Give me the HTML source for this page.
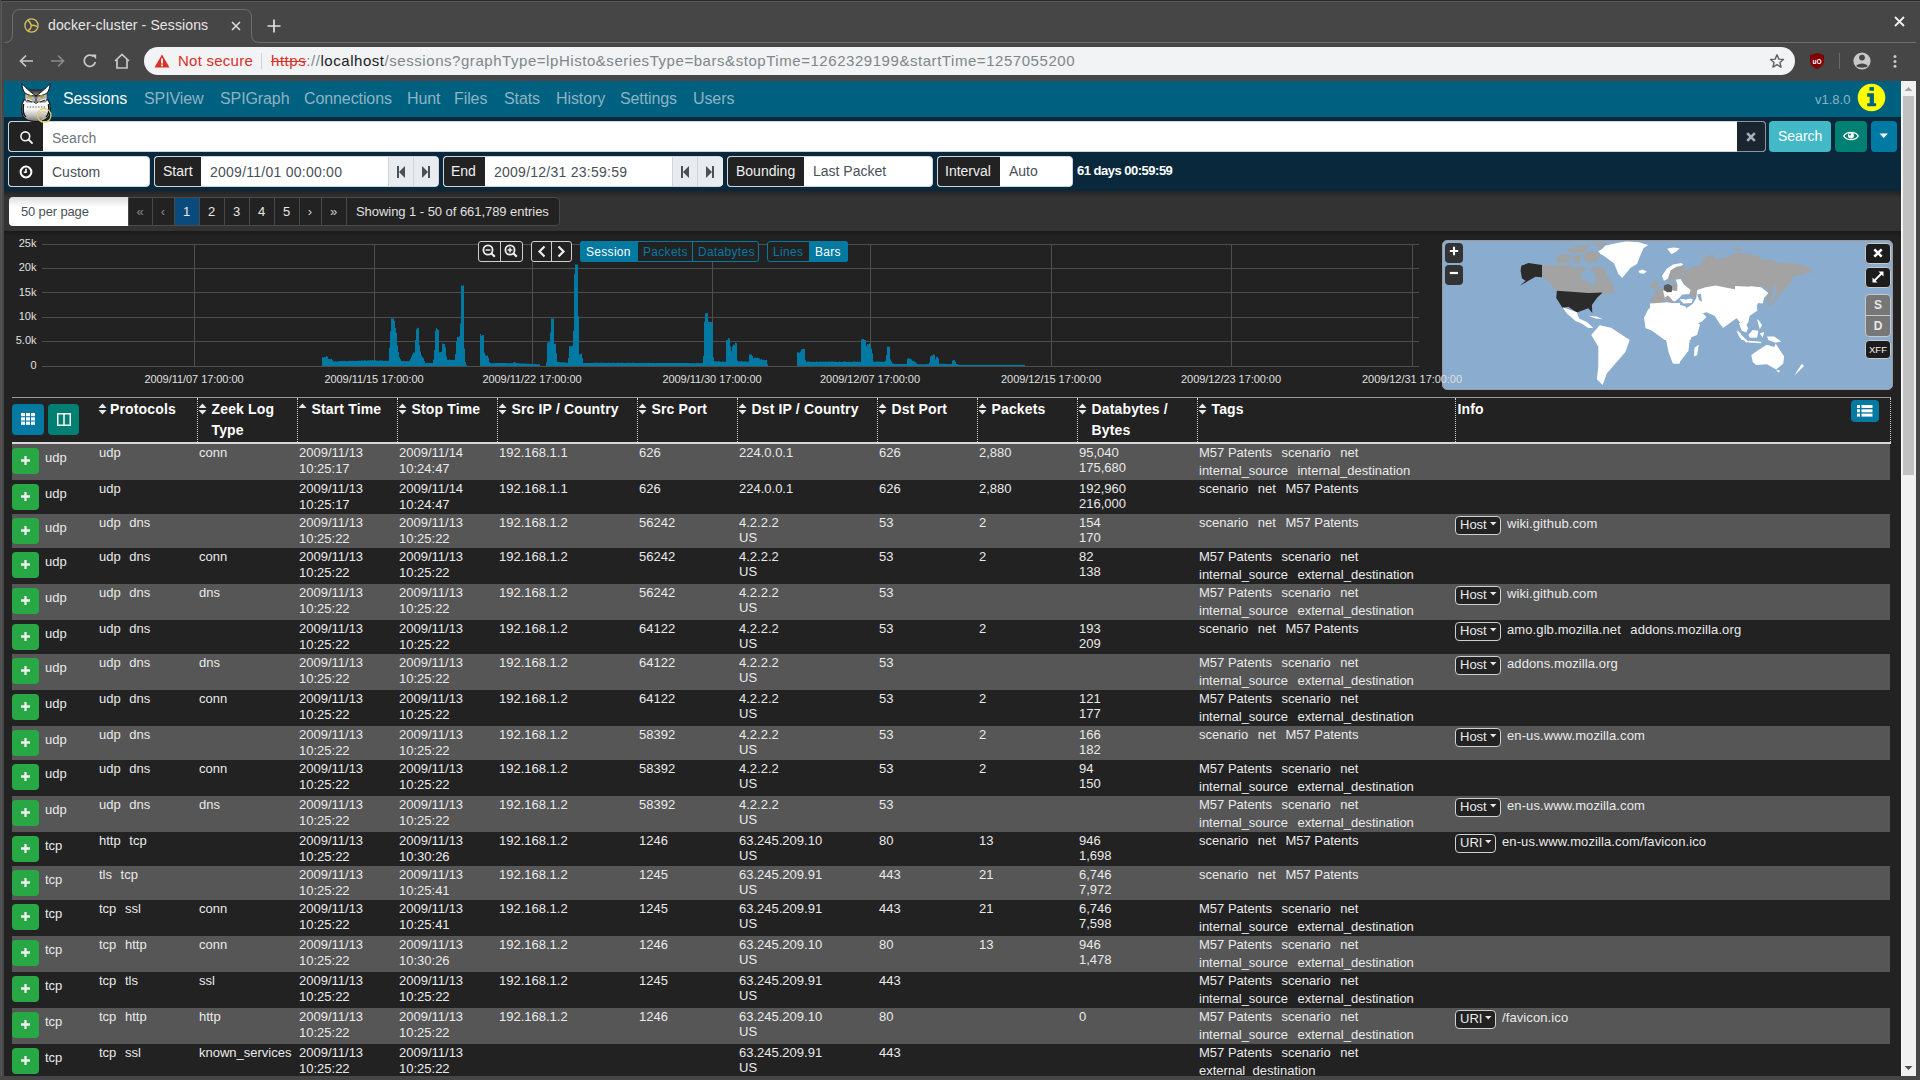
<!DOCTYPE html>
<html><head><meta charset="utf-8"><style>
*{box-sizing:border-box;margin:0;padding:0}
html,body{width:1920px;height:1080px;overflow:hidden;background:#464646;font-family:"Liberation Sans",sans-serif}
.a{position:absolute}
.t{position:absolute;white-space:pre}
svg{position:absolute;overflow:visible}
</style></head><body>
<div class="a" style="left:0px;top:0px;width:1920px;height:81px;background:#464646;"></div>
<div class="a" style="left:0px;top:0px;width:1920px;height:1px;background:#2a2a2a;"></div>
<div class="a" style="left:0px;top:1px;width:1920px;height:1px;background:#5a5a5a;"></div>
<div class="a" style="left:0px;top:0px;width:1px;height:1080px;background:#4e4e4e;"></div>
<div class="a" style="left:1px;top:1px;width:1px;height:1079px;background:#5a5a5a;"></div>
<svg style="left:0;top:0" width="300" height="44"><path d="M4.5 42.5 Q12.5 42.5 12.5 34.5 L12.5 17 Q12.5 9.5 20 9.5 L244 9.5 Q251.5 9.5 251.5 17 L251.5 34.5 Q251.5 42.5 259.5 42.5" fill="none" stroke="#6e6e6e" stroke-width="1"/></svg>
<div class="a" style="left:259px;top:42px;width:1657px;height:1px;background:#6e6e6e;"></div>
<svg style="left:24px;top:18px" width="15" height="15" viewBox="0 0 15 15"><circle cx="7.5" cy="7.5" r="6.6" fill="none" stroke="#d9c25a" stroke-width="1.3"/><path d="M7.5 7.5 C6.5 5.5 5.5 3.5 3.8 2.2 M7.5 7.5 C9.5 7 11.5 7.5 13.6 8.8 M7.5 7.5 C7.2 9.5 6 11.5 4.2 12.8" fill="none" stroke="#d9c25a" stroke-width="1.5"/></svg>
<div class="t" style="left:48px;top:16.87px;font-size:14px;line-height:17px;color:#e6e6e6;letter-spacing:0.12px;">docker-cluster - Sessions</div>
<svg style="left:230.5px;top:21px" width="10" height="10"><path d="M1 1 L9 9 M9 1 L1 9" stroke="#e0e0e0" stroke-width="1.5"/></svg>
<svg style="left:267px;top:19px" width="14" height="14"><path d="M7 0.5 V13.5 M0.5 7 H13.5" stroke="#e0e0e0" stroke-width="1.7"/></svg>
<svg style="left:1894px;top:16px" width="11" height="11"><path d="M1 1 L10 10 M10 1 L1 10" stroke="#f0f0f0" stroke-width="1.8"/></svg>
<svg style="left:18px;top:53px" width="16" height="16"><path d="M15 8 H2.5 M8 2.5 L2.5 8 L8 13.5" fill="none" stroke="#c8c8c8" stroke-width="1.7"/></svg>
<svg style="left:50px;top:53px" width="16" height="16"><path d="M1 8 H13.5 M8 2.5 L13.5 8 L8 13.5" fill="none" stroke="#8a8a8a" stroke-width="1.7"/></svg>
<svg style="left:82px;top:53px" width="16" height="16"><path d="M13.3 9 A5.6 5.6 0 1 1 11.6 3.6" fill="none" stroke="#c8c8c8" stroke-width="1.7"/><path d="M9.5 1.5 H14.2 V6.2 Z" fill="#c8c8c8"/></svg>
<svg style="left:113px;top:52px" width="18" height="18"><path d="M2 9 L9 2.5 L16 9 M4 7.5 V16 H14 V7.5" fill="none" stroke="#c8c8c8" stroke-width="1.7"/></svg>
<div class="a" style="left:144px;top:47px;width:1651px;height:28px;background:#f1f3f4;border-radius:14px;"></div>
<svg style="left:154px;top:54px" width="16" height="14"><path d="M8 0.5 L15.5 13.5 H0.5 Z" fill="#d93025"/><rect x="7.1" y="4.5" width="1.8" height="5" fill="#fff"/><rect x="7.1" y="10.5" width="1.8" height="1.8" fill="#fff"/></svg>
<div class="t" style="left:178px;top:52.04px;font-size:15px;line-height:18px;color:#d93025;letter-spacing:0.25px;">Not secure</div>
<div class="a" style="left:261px;top:53px;width:1px;height:16px;background:#d0d2d4;"></div>
<div class="t" style="left:271px;top:51.5px;font-size:15px;line-height:18px;letter-spacing:0.55px"><span style="color:#d93025;text-decoration:line-through">https</span><span style="color:#80868b">://</span><span style="color:#202124">localhost</span><span style="color:#80868b">/sessions?graphType=lpHisto&amp;seriesType=bars&amp;stopTime=1262329199&amp;startTime=1257055200</span></div>
<svg style="left:1768px;top:52px" width="18" height="18" viewBox="0 0 18 18"><path d="M9 1.8 L11.1 6.6 L16.2 7 L12.3 10.4 L13.5 15.5 L9 12.8 L4.5 15.5 L5.7 10.4 L1.8 7 L6.9 6.6 Z" transform="translate(9 9.3) scale(0.9) translate(-9 -9)" fill="none" stroke="#5f6368" stroke-width="1.6" stroke-linejoin="round"/></svg>
<svg style="left:1809px;top:52px" width="16" height="18" viewBox="0 0 16 18"><path d="M8 1 L15 3 V9 C15 13 11.5 15.5 8 17 C4.5 15.5 1 13 1 9 V3 Z" fill="#800000"/><text x="8" y="11.5" font-size="6.5" font-family="Liberation Sans" font-weight="700" fill="#fff" text-anchor="middle">uO</text></svg>
<div class="a" style="left:1839px;top:53px;width:1px;height:16px;background:#6a6a6a;"></div>
<svg style="left:1852px;top:51px" width="20" height="20" viewBox="0 0 20 20"><circle cx="10" cy="10" r="8.6" fill="#c8c8c8"/><circle cx="10" cy="6.6" r="2.9" fill="#464646"/><path d="M4.2 15 C6 11.5 14 11.5 15.8 15 C14 17.3 6 17.3 4.2 15 Z" fill="#464646"/></svg>
<svg style="left:1891.5px;top:53px" width="6" height="16"><circle cx="3" cy="3.6" r="1.5" fill="#c8c8c8"/><circle cx="3" cy="8.4" r="1.5" fill="#c8c8c8"/><circle cx="3" cy="13.3" r="1.5" fill="#c8c8c8"/></svg>
<div class="a" style="left:4px;top:81px;width:1897px;height:995px;background:#222;"></div>
<div class="a" style="left:4px;top:81px;width:1897px;height:36px;background:#00607f;"></div>
<div class="t" style="left:63px;top:89.21px;font-size:16px;line-height:19px;color:#f4f8fa;letter-spacing:-0.1px;">Sessions</div>
<div class="t" style="left:144px;top:89.21px;font-size:16px;line-height:19px;color:#8db4c4;letter-spacing:-0.1px;">SPIView</div>
<div class="t" style="left:220px;top:89.21px;font-size:16px;line-height:19px;color:#8db4c4;letter-spacing:-0.1px;">SPIGraph</div>
<div class="t" style="left:304px;top:89.21px;font-size:16px;line-height:19px;color:#8db4c4;letter-spacing:-0.1px;">Connections</div>
<div class="t" style="left:407px;top:89.21px;font-size:16px;line-height:19px;color:#8db4c4;letter-spacing:-0.1px;">Hunt</div>
<div class="t" style="left:454px;top:89.21px;font-size:16px;line-height:19px;color:#8db4c4;letter-spacing:-0.1px;">Files</div>
<div class="t" style="left:504px;top:89.21px;font-size:16px;line-height:19px;color:#8db4c4;letter-spacing:-0.1px;">Stats</div>
<div class="t" style="left:556px;top:89.21px;font-size:16px;line-height:19px;color:#8db4c4;letter-spacing:-0.1px;">History</div>
<div class="t" style="left:620px;top:89.21px;font-size:16px;line-height:19px;color:#8db4c4;letter-spacing:-0.1px;">Settings</div>
<div class="t" style="left:693px;top:89.21px;font-size:16px;line-height:19px;color:#8db4c4;letter-spacing:-0.1px;">Users</div>
<div class="t" style="left:1815px;top:92.20px;font-size:13px;line-height:16px;color:#8db4c4;letter-spacing:0px;">v1.8.0</div>
<svg style="left:1857px;top:83px" width="29" height="29" viewBox="0 0 29 29"><circle cx="14.5" cy="14.5" r="13.8" fill="#ffff00"/><rect x="12.4" y="4.1" width="4.5" height="3.6" fill="#00607f"/><path d="M10.2 10.2 H16.9 V20.2 H19.1 V23.3 H10.2 V20.2 H12.7 V13.8 H10.2 Z" fill="#00607f"/></svg>
<svg style="left:14px;top:80px;z-index:5" width="44" height="44" viewBox="0 0 44 44">
<defs><linearGradient id="og" x1="0" y1="0" x2="0" y2="1"><stop offset="0" stop-color="#ffffff"/><stop offset="0.45" stop-color="#f4f4f4"/><stop offset="0.75" stop-color="#b8b8b8"/><stop offset="1" stop-color="#707070"/></linearGradient>
<linearGradient id="hg" x1="0" y1="0" x2="0" y2="1"><stop offset="0" stop-color="#222"/><stop offset="1" stop-color="#aaa"/></linearGradient></defs>
<path d="M10 20 C7 24 7 32 9 36 C11 40 15 41.5 22 41.5 C29 41.5 33 40 35 36 C37 32 37 24 34 20 Z" fill="url(#og)" stroke="#111" stroke-width="1.1"/>
<path d="M11.5 13 C10.5 16 10.5 20 12.5 22 L31.5 22 C33.5 20 33.5 16 32.5 13 Z" fill="#b4b4b4" stroke="#333" stroke-width="0.6"/><path d="M12 19 L18 21 M32 19 L26 21" stroke="#fff" stroke-width="1.2"/>
<path d="M15 9.5 L29 9.5 L28 15 L22 17 L16 15 Z" fill="url(#hg)"/>
<path d="M8 3.5 C11 7 15 11 22 16 C18 16 14 15 11.5 13.5 C9 11 8 7 8 3.5 Z" fill="#fff" stroke="#111" stroke-width="1"/>
<path d="M36 3.5 C33 7 29 11 22 16 C26 16 30 15 32.5 13.5 C35 11 36 7 36 3.5 Z" fill="#fff" stroke="#111" stroke-width="1"/>
<ellipse cx="16.5" cy="16.3" rx="2" ry="1.4" fill="#a09a10"/><ellipse cx="27.5" cy="16.3" rx="2" ry="1.4" fill="#a09a10"/>
<path d="M21 17 L22 21.5 L23 17 Z" fill="#fff" stroke="#111" stroke-width="0.6"/>
<path d="M13 20 L18 22 M31 20 L26 22 M20 22 L22 23.5 L24 22" stroke="#111" stroke-width="0.9" fill="none"/>
<path d="M13 27 L31 27" stroke="#333" stroke-width="0.9" stroke-dasharray="1.2 1.6"/>
<path d="M9.5 24 C8.5 30 9.5 35 12 37 M34.5 24 C35.5 30 34.5 35 32 37" stroke="#111" stroke-width="1.6" fill="none"/>
<circle cx="30.2" cy="35.4" r="6.8" fill="none" stroke="#e0cf6a" stroke-width="1.2"/>
<path d="M25 34 C27 31 31 31 33 33 M29 36 C30 38 29 40 27 41" stroke="#e0cf6a" stroke-width="1" fill="none"/>
</svg>
<div class="a" style="left:4px;top:117px;width:1897px;height:74px;background:#0a283c;"></div>
<div class="a" style="left:8px;top:121px;width:1758px;height:31px;background:#fff;border-radius:4px;border:1px solid #ced4da;"></div>
<div class="a" style="left:8px;top:121px;width:35px;height:31px;background:#222;border-radius:4px 0 0 4px;border:1px solid #ced4da;border-right:none;"></div>
<svg style="left:19px;top:130px" width="15" height="15" viewBox="0 0 15 15"><circle cx="6.3" cy="6.3" r="4.4" fill="none" stroke="#f0f0f0" stroke-width="1.6"/><path d="M9.5 9.5 L13 13" stroke="#f0f0f0" stroke-width="1.8" stroke-linecap="round"/></svg>
<div class="t" style="left:52px;top:129.87px;font-size:14px;line-height:17px;color:#6c757d;">Search</div>
<div class="a" style="left:1737px;top:121px;width:29px;height:31px;background:#1b2530;border-radius:0 4px 4px 0;border:1px solid #8d959c;border-left:none;"></div>
<svg style="left:1746px;top:132px" width="10" height="10"><path d="M1.2 1.2 L8.8 8.8 M8.8 1.2 L1.2 8.8" stroke="#a9b0b6" stroke-width="2.6"/></svg>
<div class="a" style="left:1769px;top:121px;width:62px;height:31px;background:#43b8c7;border-radius:4px;"></div>
<div class="t" style="left:1778px;top:128.37px;font-size:14px;line-height:17px;color:#fff;">Search</div>
<div class="a" style="left:1835px;top:121px;width:32px;height:31px;background:#007f73;border-radius:4px;"></div>
<svg style="left:1843px;top:130px" width="16" height="12" viewBox="0 0 16 12"><path d="M0.8 6 C3.5 1.2 12.5 1.2 15.2 6 C12.5 10.8 3.5 10.8 0.8 6 Z" fill="none" stroke="#fff" stroke-width="1.4"/><circle cx="8" cy="5.6" r="3" fill="#fff"/><circle cx="7" cy="4.6" r="1" fill="#007f73"/></svg>
<div class="a" style="left:1871px;top:121px;width:26px;height:31px;background:#0079a3;border-radius:4px;"></div>
<svg style="left:1879px;top:132.5px" width="10" height="6"><path d="M0.5 0.5 H9 L4.75 5 Z" fill="#fff"/></svg>
<div class="a" style="left:8px;top:156px;width:142px;height:31px;background:#fff;border-radius:4px;border:1px solid #ced4da;"></div>
<div class="a" style="left:8px;top:156px;width:35px;height:31px;background:#222;border-radius:4px 0 0 4px;border:1px solid #ced4da;border-right:none;"></div>
<svg style="left:19px;top:165px" width="14" height="14" viewBox="0 0 14 14"><circle cx="7" cy="7" r="5.4" fill="none" stroke="#fff" stroke-width="2"/><path d="M7 3.8 V7.3 H4.8" fill="none" stroke="#fff" stroke-width="1.6"/></svg>
<div class="t" style="left:52px;top:163.87px;font-size:14px;line-height:17px;color:#495057;">Custom</div>
<div class="a" style="left:154px;top:156px;width:285px;height:31px;background:#fff;border-radius:4px;border:1px solid #ced4da;"></div>
<div class="a" style="left:154px;top:156px;width:47px;height:31px;background:#222;border-radius:4px 0 0 4px;border:1px solid #ced4da;border-right:none;"></div>
<div class="t" style="left:163px;top:163.37px;font-size:14px;line-height:17px;color:#f0f0f0;">Start</div>
<div class="t" style="left:210px;top:163.87px;font-size:14px;line-height:17px;color:#495057;letter-spacing:0.25px;">2009/11/01 00:00:00</div>
<div class="a" style="left:388px;top:157px;width:50px;height:29px;background:#e9ecef;border-radius:0 3px 3px 0;"></div>
<div class="a" style="left:413px;top:157px;width:1px;height:29px;background:#ced4da;"></div>
<div class="a" style="left:388px;top:157px;width:1px;height:29px;background:#ced4da;"></div>
<svg style="left:397px;top:166px" width="9" height="12"><rect x="0" y="0" width="2" height="12" fill="#495057"/><path d="M8 0 V12 L2 6 Z" fill="#495057"/></svg>
<svg style="left:422px;top:166px" width="9" height="12"><path d="M0 0 V12 L6 6 Z" fill="#495057"/><rect x="6" y="0" width="2" height="12" fill="#495057"/></svg>
<div class="a" style="left:443px;top:156px;width:280px;height:31px;background:#fff;border-radius:4px;border:1px solid #ced4da;"></div>
<div class="a" style="left:443px;top:156px;width:42px;height:31px;background:#222;border-radius:4px 0 0 4px;border:1px solid #ced4da;border-right:none;"></div>
<div class="t" style="left:451px;top:163.37px;font-size:14px;line-height:17px;color:#f0f0f0;">End</div>
<div class="t" style="left:494px;top:163.87px;font-size:14px;line-height:17px;color:#495057;letter-spacing:0.25px;">2009/12/31 23:59:59</div>
<div class="a" style="left:672px;top:157px;width:51px;height:29px;background:#e9ecef;border-radius:0 3px 3px 0;"></div>
<div class="a" style="left:672px;top:157px;width:1px;height:29px;background:#ced4da;"></div>
<div class="a" style="left:697px;top:157px;width:1px;height:29px;background:#ced4da;"></div>
<svg style="left:681px;top:166px" width="9" height="12"><rect x="0" y="0" width="2" height="12" fill="#495057"/><path d="M8 0 V12 L2 6 Z" fill="#495057"/></svg>
<svg style="left:706px;top:166px" width="9" height="12"><path d="M0 0 V12 L6 6 Z" fill="#495057"/><rect x="6" y="0" width="2" height="12" fill="#495057"/></svg>
<div class="a" style="left:727px;top:156px;width:206px;height:31px;background:#fff;border-radius:4px;border:1px solid #ced4da;"></div>
<div class="a" style="left:727px;top:156px;width:77px;height:31px;background:#222;border-radius:4px 0 0 4px;border:1px solid #ced4da;border-right:none;"></div>
<div class="t" style="left:736px;top:163.37px;font-size:14px;line-height:17px;color:#f0f0f0;">Bounding</div>
<div class="t" style="left:813px;top:163.37px;font-size:14px;line-height:17px;color:#495057;">Last Packet</div>
<div class="a" style="left:937px;top:156px;width:136px;height:31px;background:#fff;border-radius:4px;border:1px solid #ced4da;"></div>
<div class="a" style="left:937px;top:156px;width:63px;height:31px;background:#222;border-radius:4px 0 0 4px;border:1px solid #ced4da;border-right:none;"></div>
<div class="t" style="left:945px;top:163.37px;font-size:14px;line-height:17px;color:#f0f0f0;">Interval</div>
<div class="t" style="left:1009px;top:163.37px;font-size:14px;line-height:17px;color:#495057;">Auto</div>
<div class="t" style="left:1077px;top:162.70px;font-size:13px;line-height:16px;color:#fff;font-weight:700;letter-spacing:-0.5px;">61 days 00:59:59</div>
<div class="a" style="left:4px;top:191px;width:1897px;height:40px;background:linear-gradient(#232323,#333 7px,#333);"></div>
<div class="a" style="left:4px;top:231px;width:1897px;height:6px;background:linear-gradient(#1a1a1a,#222);"></div>
<div class="a" style="left:9px;top:197px;width:120px;height:29px;background:#fff;border-radius:4px 0 0 4px;background:linear-gradient(#dcdcdc,#fff 35%);"></div>
<div class="t" style="left:21px;top:203.70px;font-size:13px;line-height:16px;color:#495057;letter-spacing:-0.15px;">50 per page</div>
<div class="a" style="left:128px;top:197px;width:432px;height:29px;background:#222;border-radius:0 4px 4px 0;border:1px solid #4a4a4a;"></div>
<div class="t" style="left:128px;top:204px;width:24px;text-align:center;font-size:13px;line-height:15px;color:#8a8a8a">«</div>
<div class="a" style="left:152px;top:198px;width:1px;height:27px;background:#4a4a4a;"></div>
<div class="t" style="left:152px;top:204px;width:22px;text-align:center;font-size:13px;line-height:15px;color:#8a8a8a">‹</div>
<div class="a" style="left:174px;top:198px;width:1px;height:27px;background:#4a4a4a;"></div>
<div class="a" style="left:175px;top:198px;width:24px;height:27px;background:#0a4b7e;"></div>
<div class="t" style="left:174px;top:204px;width:25px;text-align:center;font-size:13px;line-height:15px;color:#e8e8e8">1</div>
<div class="a" style="left:199px;top:198px;width:1px;height:27px;background:#4a4a4a;"></div>
<div class="t" style="left:199px;top:204px;width:25px;text-align:center;font-size:13px;line-height:15px;color:#e8e8e8">2</div>
<div class="a" style="left:224px;top:198px;width:1px;height:27px;background:#4a4a4a;"></div>
<div class="t" style="left:224px;top:204px;width:25px;text-align:center;font-size:13px;line-height:15px;color:#e8e8e8">3</div>
<div class="a" style="left:249px;top:198px;width:1px;height:27px;background:#4a4a4a;"></div>
<div class="t" style="left:249px;top:204px;width:25px;text-align:center;font-size:13px;line-height:15px;color:#e8e8e8">4</div>
<div class="a" style="left:274px;top:198px;width:1px;height:27px;background:#4a4a4a;"></div>
<div class="t" style="left:274px;top:204px;width:25px;text-align:center;font-size:13px;line-height:15px;color:#e8e8e8">5</div>
<div class="a" style="left:299px;top:198px;width:1px;height:27px;background:#4a4a4a;"></div>
<div class="t" style="left:299px;top:204px;width:22px;text-align:center;font-size:13px;line-height:15px;color:#d0d0d0">›</div>
<div class="a" style="left:321px;top:198px;width:1px;height:27px;background:#4a4a4a;"></div>
<div class="t" style="left:321px;top:204px;width:25px;text-align:center;font-size:13px;line-height:15px;color:#d0d0d0">»</div>
<div class="a" style="left:346px;top:198px;width:1px;height:27px;background:#4a4a4a;"></div>
<div class="t" style="left:356px;top:203.70px;font-size:13px;line-height:16px;color:#e0e0e0;letter-spacing:-0.05px;">Showing 1 - 50 of 661,789 entries</div>
<svg style="left:0;top:0" width="1920" height="400"><rect x="42" y="244" width="1377" height="1" fill="#4e4e4e"/><rect x="42" y="268" width="1377" height="1" fill="#4e4e4e"/><rect x="42" y="292" width="1377" height="1" fill="#4e4e4e"/><rect x="42" y="317" width="1377" height="1" fill="#4e4e4e"/><rect x="42" y="341" width="1377" height="1" fill="#4e4e4e"/><rect x="42" y="366" width="1377" height="1" fill="#4e4e4e"/><rect x="194" y="244" width="1" height="122" fill="#4e4e4e"/><rect x="374" y="244" width="1" height="122" fill="#4e4e4e"/><rect x="532" y="244" width="1" height="122" fill="#4e4e4e"/><rect x="712" y="244" width="1" height="122" fill="#4e4e4e"/><rect x="870" y="244" width="1" height="122" fill="#4e4e4e"/><rect x="1051" y="244" width="1" height="122" fill="#4e4e4e"/><rect x="1231" y="244" width="1" height="122" fill="#4e4e4e"/><rect x="1412" y="244" width="1" height="122" fill="#4e4e4e"/><path d="M322 366 L322 357.3 L323 357.3 L323 357.4 L324 357.4 L324 357.1 L325 357.1 L325 357.2 L326 357.2 L326 356.1 L327 356.1 L327 356.8 L328 356.8 L328 359.1 L329 359.1 L329 359.1 L330 359.1 L330 359.3 L331 359.3 L331 358.8 L332 358.8 L332 359.9 L333 359.9 L333 361.6 L334 361.6 L334 361.4 L335 361.4 L335 361.1 L336 361.1 L336 361.5 L337 361.5 L337 361.4 L338 361.4 L338 361.2 L339 361.2 L339 360.9 L340 360.9 L340 361.1 L341 361.1 L341 361.2 L342 361.2 L342 360.8 L343 360.8 L343 361.3 L344 361.3 L344 360.8 L345 360.8 L345 361.1 L346 361.1 L346 361.2 L347 361.2 L347 361.2 L348 361.2 L348 361.0 L349 361.0 L349 360.7 L350 360.7 L350 361.1 L351 361.1 L351 360.8 L352 360.8 L352 360.7 L353 360.7 L353 360.9 L354 360.9 L354 360.7 L355 360.7 L355 361.0 L356 361.0 L356 361.0 L357 361.0 L357 360.9 L358 360.9 L358 360.5 L359 360.5 L359 360.7 L360 360.7 L360 360.7 L361 360.7 L361 360.5 L362 360.5 L362 360.6 L363 360.6 L363 360.7 L364 360.7 L364 360.3 L365 360.3 L365 360.4 L366 360.4 L366 360.7 L367 360.7 L367 360.4 L368 360.4 L368 360.4 L369 360.4 L369 360.2 L370 360.2 L370 360.2 L371 360.2 L371 360.5 L372 360.5 L372 360.0 L373 360.0 L373 360.6 L374 360.6 L374 360.4 L375 360.4 L375 360.3 L376 360.3 L376 360.7 L377 360.7 L377 360.5 L378 360.5 L378 360.9 L379 360.9 L379 360.5 L380 360.5 L380 360.5 L381 360.5 L381 360.6 L382 360.6 L382 360.5 L383 360.5 L383 360.9 L384 360.9 L384 360.7 L385 360.7 L385 360.8 L386 360.8 L386 360.9 L387 360.9 L387 361.0 L388 361.0 L388 360.8 L389 360.8 L389 347.8 L390 347.8 L390 331.2 L391 331.2 L391 318.4 L392 318.4 L392 318.4 L393 318.4 L393 318.4 L394 318.4 L394 320.9 L395 320.9 L395 327.9 L396 327.9 L396 332.7 L397 332.7 L397 345.5 L398 345.5 L398 352.0 L399 352.0 L399 357.3 L400 357.3 L400 359.1 L401 359.1 L401 361.1 L402 361.1 L402 361.1 L403 361.1 L403 360.9 L404 360.9 L404 361.3 L405 361.3 L405 361.1 L406 361.1 L406 361.3 L407 361.3 L407 361.3 L408 361.3 L408 361.3 L409 361.3 L409 360.4 L410 360.4 L410 358.9 L411 358.9 L411 356.7 L412 356.7 L412 354.6 L413 354.6 L413 352.4 L414 352.4 L414 352.4 L415 352.4 L415 340.1 L416 340.1 L416 329.3 L417 329.3 L417 327.7 L418 327.7 L418 328.0 L419 328.0 L419 345.2 L420 345.2 L420 351.6 L421 351.6 L421 355.4 L422 355.4 L422 357.1 L423 357.1 L423 358.2 L424 358.2 L424 361.1 L425 361.1 L425 363.2 L426 363.2 L426 363.1 L427 363.1 L427 363.1 L428 363.1 L428 363.1 L429 363.1 L429 362.9 L430 362.9 L430 362.9 L431 362.9 L431 363.0 L432 363.0 L432 363.0 L433 363.0 L433 359.8 L434 359.8 L434 350.1 L435 350.1 L435 330.7 L436 330.7 L436 328.1 L437 328.1 L437 329.3 L438 329.3 L438 330.1 L439 330.1 L439 352.3 L440 352.3 L440 352.0 L441 352.0 L441 351.7 L442 351.7 L442 343.6 L443 343.6 L443 344.0 L444 344.0 L444 344.0 L445 344.0 L445 347.3 L446 347.3 L446 356.6 L447 356.6 L447 359.8 L448 359.8 L448 360.0 L449 360.0 L449 359.6 L450 359.6 L450 360.0 L451 360.0 L451 360.0 L452 360.0 L452 359.9 L453 359.9 L453 359.9 L454 359.9 L454 359.8 L455 359.8 L455 354.1 L456 354.1 L456 341.1 L457 341.1 L457 337.0 L458 337.0 L458 337.2 L459 337.2 L459 336.2 L460 336.2 L460 323.5 L461 323.5 L461 285.6 L462 285.6 L462 285.6 L463 285.6 L463 285.6 L464 285.6 L464 348.4 L465 348.4 L465 361.9 L466 361.9 L466 364.7 L467 364.7 L467 366.0 L468 366.0 L468 366.0 L469 366.0 L469 366.0 L470 366.0 L470 366.0 L471 366.0 L471 366.0 L472 366.0 L472 366.0 L473 366.0 L473 366.0 L474 366.0 L474 366.0 L475 366.0 L475 366.0 L476 366.0 L476 366.0 L477 366.0 L477 366.0 L478 366.0 L478 366.0 L479 366.0 L479 366.0 L480 366.0 L480 333.9 L481 333.9 L481 335.7 L482 335.7 L482 335.3 L483 335.3 L483 334.9 L484 334.9 L484 352.4 L485 352.4 L485 355.2 L486 355.2 L486 355.8 L487 355.8 L487 355.6 L488 355.6 L488 357.7 L489 357.7 L489 362.1 L490 362.1 L490 363.0 L491 363.0 L491 363.2 L492 363.2 L492 363.2 L493 363.2 L493 363.2 L494 363.2 L494 363.2 L495 363.2 L495 363.1 L496 363.1 L496 363.1 L497 363.1 L497 363.1 L498 363.1 L498 363.1 L499 363.1 L499 363.1 L500 363.1 L500 363.1 L501 363.1 L501 363.1 L502 363.1 L502 363.1 L503 363.1 L503 363.0 L504 363.0 L504 363.0 L505 363.0 L505 363.0 L506 363.0 L506 363.0 L507 363.0 L507 363.3 L508 363.3 L508 363.2 L509 363.2 L509 363.2 L510 363.2 L510 363.0 L511 363.0 L511 363.2 L512 363.2 L512 363.3 L513 363.3 L513 362.4 L514 362.4 L514 362.0 L515 362.0 L515 362.4 L516 362.4 L516 363.1 L517 363.1 L517 363.2 L518 363.2 L518 363.3 L519 363.3 L519 363.3 L520 363.3 L520 363.4 L521 363.4 L521 363.4 L522 363.4 L522 363.5 L523 363.5 L523 363.5 L524 363.5 L524 363.6 L525 363.6 L525 363.6 L526 363.6 L526 363.7 L527 363.7 L527 363.7 L528 363.7 L528 363.8 L529 363.8 L529 363.8 L530 363.8 L530 363.9 L531 363.9 L531 363.9 L532 363.9 L532 364.0 L533 364.0 L533 364.0 L534 364.0 L534 364.1 L535 364.1 L535 364.1 L536 364.1 L536 364.2 L537 364.2 L537 364.2 L538 364.2 L538 364.3 L539 364.3 L539 364.3 L540 364.3 L540 366.0 L541 366.0 L541 366.0 L542 366.0 L542 366.0 L543 366.0 L543 366.0 L544 366.0 L544 366.0 L545 366.0 L545 366.0 L546 366.0 L546 362.6 L547 362.6 L547 343.1 L548 343.1 L548 341.8 L549 341.8 L549 342.2 L550 342.2 L550 332.2 L551 332.2 L551 318.4 L552 318.4 L552 318.4 L553 318.4 L553 318.4 L554 318.4 L554 343.9 L555 343.9 L555 343.6 L556 343.6 L556 353.2 L557 353.2 L557 361.7 L558 361.7 L558 361.9 L559 361.9 L559 361.9 L560 361.9 L560 362.2 L561 362.2 L561 362.4 L562 362.4 L562 362.2 L563 362.2 L563 362.2 L564 362.2 L564 362.4 L565 362.4 L565 362.6 L566 362.6 L566 362.7 L567 362.7 L567 362.8 L568 362.8 L568 357.9 L569 357.9 L569 346.3 L570 346.3 L570 346.1 L571 346.1 L571 346.3 L572 346.3 L572 345.7 L573 345.7 L573 330.8 L574 330.8 L574 274.2 L575 274.2 L575 264.5 L576 264.5 L576 264.5 L577 264.5 L577 264.5 L578 264.5 L578 316.3 L579 316.3 L579 354.6 L580 354.6 L580 353.9 L581 353.9 L581 353.5 L582 353.5 L582 358.0 L583 358.0 L583 363.1 L584 363.1 L584 363.0 L585 363.0 L585 363.0 L586 363.0 L586 362.9 L587 362.9 L587 362.9 L588 362.9 L588 363.0 L589 363.0 L589 363.0 L590 363.0 L590 363.0 L591 363.0 L591 363.0 L592 363.0 L592 362.9 L593 362.9 L593 362.8 L594 362.8 L594 362.7 L595 362.7 L595 362.7 L596 362.7 L596 362.8 L597 362.8 L597 362.8 L598 362.8 L598 362.7 L599 362.7 L599 363.0 L600 363.0 L600 362.8 L601 362.8 L601 362.7 L602 362.7 L602 362.7 L603 362.7 L603 362.7 L604 362.7 L604 362.8 L605 362.8 L605 363.0 L606 363.0 L606 362.7 L607 362.7 L607 362.9 L608 362.9 L608 362.7 L609 362.7 L609 362.7 L610 362.7 L610 362.9 L611 362.9 L611 362.9 L612 362.9 L612 362.7 L613 362.7 L613 362.8 L614 362.8 L614 363.0 L615 363.0 L615 363.0 L616 363.0 L616 363.0 L617 363.0 L617 362.7 L618 362.7 L618 362.7 L619 362.7 L619 363.0 L620 363.0 L620 362.7 L621 362.7 L621 362.7 L622 362.7 L622 362.8 L623 362.8 L623 362.9 L624 362.9 L624 362.9 L625 362.9 L625 363.0 L626 363.0 L626 363.1 L627 363.1 L627 362.7 L628 362.7 L628 362.8 L629 362.8 L629 362.9 L630 362.9 L630 362.7 L631 362.7 L631 362.9 L632 362.9 L632 362.8 L633 362.8 L633 362.8 L634 362.8 L634 363.0 L635 363.0 L635 363.0 L636 363.0 L636 363.0 L637 363.0 L637 363.0 L638 363.0 L638 362.9 L639 362.9 L639 363.0 L640 363.0 L640 363.0 L641 363.0 L641 363.1 L642 363.1 L642 362.8 L643 362.8 L643 363.0 L644 363.0 L644 363.0 L645 363.0 L645 362.9 L646 362.9 L646 362.8 L647 362.8 L647 363.0 L648 363.0 L648 362.8 L649 362.8 L649 363.0 L650 363.0 L650 362.9 L651 362.9 L651 362.9 L652 362.9 L652 363.1 L653 363.1 L653 363.0 L654 363.0 L654 363.1 L655 363.1 L655 363.2 L656 363.2 L656 362.9 L657 362.9 L657 363.1 L658 363.1 L658 363.0 L659 363.0 L659 362.9 L660 362.9 L660 363.0 L661 363.0 L661 363.1 L662 363.1 L662 363.0 L663 363.0 L663 363.0 L664 363.0 L664 362.9 L665 362.9 L665 363.1 L666 363.1 L666 363.0 L667 363.0 L667 363.1 L668 363.1 L668 363.1 L669 363.1 L669 362.9 L670 362.9 L670 363.0 L671 363.0 L671 363.0 L672 363.0 L672 362.9 L673 362.9 L673 362.9 L674 362.9 L674 363.0 L675 363.0 L675 363.0 L676 363.0 L676 363.0 L677 363.0 L677 363.0 L678 363.0 L678 363.0 L679 363.0 L679 363.1 L680 363.1 L680 363.0 L681 363.0 L681 363.0 L682 363.0 L682 362.9 L683 362.9 L683 363.0 L684 363.0 L684 362.9 L685 362.9 L685 362.9 L686 362.9 L686 363.1 L687 363.1 L687 363.0 L688 363.0 L688 362.9 L689 362.9 L689 362.9 L690 362.9 L690 363.2 L691 363.2 L691 363.2 L692 363.2 L692 363.1 L693 363.1 L693 363.2 L694 363.2 L694 363.2 L695 363.2 L695 363.2 L696 363.2 L696 363.0 L697 363.0 L697 363.0 L698 363.0 L698 362.9 L699 362.9 L699 363.2 L700 363.2 L700 363.0 L701 363.0 L701 363.0 L702 363.0 L702 363.2 L703 363.2 L703 356.1 L704 356.1 L704 321.8 L705 321.8 L705 313.3 L706 313.3 L706 313.3 L707 313.3 L707 313.3 L708 313.3 L708 321.5 L709 321.5 L709 322.1 L710 322.1 L710 322.1 L711 322.1 L711 322.1 L712 322.1 L712 322.1 L713 322.1 L713 357.4 L714 357.4 L714 361.6 L715 361.6 L715 361.2 L716 361.2 L716 361.6 L717 361.6 L717 361.5 L718 361.5 L718 361.3 L719 361.3 L719 361.4 L720 361.4 L720 361.8 L721 361.8 L721 361.7 L722 361.7 L722 361.6 L723 361.6 L723 361.7 L724 361.7 L724 361.8 L725 361.8 L725 361.8 L726 361.8 L726 340.5 L727 340.5 L727 340.1 L728 340.1 L728 338.2 L729 338.2 L729 338.6 L730 338.6 L730 346.2 L731 346.2 L731 351.2 L732 351.2 L732 346.2 L733 346.2 L733 344.6 L734 344.6 L734 345.1 L735 345.1 L735 342.5 L736 342.5 L736 343.1 L737 343.1 L737 360.6 L738 360.6 L738 361.4 L739 361.4 L739 361.3 L740 361.3 L740 361.5 L741 361.5 L741 361.1 L742 361.1 L742 361.5 L743 361.5 L743 361.6 L744 361.6 L744 361.5 L745 361.5 L745 361.3 L746 361.3 L746 361.4 L747 361.4 L747 361.8 L748 361.8 L748 361.6 L749 361.6 L749 354.3 L750 354.3 L750 354.8 L751 354.8 L751 354.6 L752 354.6 L752 356.0 L753 356.0 L753 358.5 L754 358.5 L754 357.7 L755 357.7 L755 357.7 L756 357.7 L756 358.1 L757 358.1 L757 357.4 L758 357.4 L758 358.1 L759 358.1 L759 358.4 L760 358.4 L760 359.4 L761 359.4 L761 359.0 L762 359.0 L762 360.0 L763 360.0 L763 359.7 L764 359.7 L764 360.2 L765 360.2 L765 359.9 L766 359.9 L766 359.7 L767 359.7 L767 364.3 L768 364.3 L768 366.0 L769 366.0 L769 366.0 L770 366.0 L770 366.0 L771 366.0 L771 366.0 L772 366.0 L772 366.0 L773 366.0 L773 366.0 L774 366.0 L774 366.0 L775 366.0 L775 366.0 L776 366.0 L776 366.0 L777 366.0 L777 366.0 L778 366.0 L778 366.0 L779 366.0 L779 366.0 L780 366.0 L780 366.0 L781 366.0 L781 366.0 L782 366.0 L782 366.0 L783 366.0 L783 366.0 L784 366.0 L784 366.0 L785 366.0 L785 366.0 L786 366.0 L786 366.0 L787 366.0 L787 366.0 L788 366.0 L788 366.0 L789 366.0 L789 366.0 L790 366.0 L790 366.0 L791 366.0 L791 366.0 L792 366.0 L792 366.0 L793 366.0 L793 366.0 L794 366.0 L794 366.0 L795 366.0 L795 366.0 L796 366.0 L796 366.0 L797 366.0 L797 351.9 L798 351.9 L798 352.7 L799 352.7 L799 352.6 L800 352.6 L800 351.6 L801 351.6 L801 349.5 L802 349.5 L802 348.9 L803 348.9 L803 348.8 L804 348.8 L804 349.1 L805 349.1 L805 359.9 L806 359.9 L806 361.8 L807 361.8 L807 361.8 L808 361.8 L808 361.6 L809 361.6 L809 361.8 L810 361.8 L810 361.7 L811 361.7 L811 361.9 L812 361.9 L812 361.8 L813 361.8 L813 362.0 L814 362.0 L814 361.9 L815 361.9 L815 362.0 L816 362.0 L816 361.6 L817 361.6 L817 361.7 L818 361.7 L818 361.9 L819 361.9 L819 361.7 L820 361.7 L820 361.5 L821 361.5 L821 361.9 L822 361.9 L822 361.6 L823 361.6 L823 361.8 L824 361.8 L824 361.7 L825 361.7 L825 361.6 L826 361.6 L826 361.8 L827 361.8 L827 361.7 L828 361.7 L828 361.6 L829 361.6 L829 361.5 L830 361.5 L830 361.8 L831 361.8 L831 361.6 L832 361.6 L832 361.6 L833 361.6 L833 361.7 L834 361.7 L834 361.8 L835 361.8 L835 361.8 L836 361.8 L836 362.0 L837 362.0 L837 361.9 L838 361.9 L838 362.0 L839 362.0 L839 361.6 L840 361.6 L840 361.9 L841 361.9 L841 361.9 L842 361.9 L842 362.0 L843 362.0 L843 361.5 L844 361.5 L844 361.5 L845 361.5 L845 361.6 L846 361.6 L846 361.9 L847 361.9 L847 361.9 L848 361.9 L848 361.8 L849 361.8 L849 361.8 L850 361.8 L850 361.9 L851 361.9 L851 361.8 L852 361.8 L852 361.9 L853 361.9 L853 361.5 L854 361.5 L854 361.5 L855 361.5 L855 361.7 L856 361.7 L856 361.9 L857 361.9 L857 361.5 L858 361.5 L858 361.8 L859 361.8 L859 361.8 L860 361.8 L860 362.0 L861 362.0 L861 339.5 L862 339.5 L862 339.2 L863 339.2 L863 339.1 L864 339.1 L864 340.1 L865 340.1 L865 340.1 L866 340.1 L866 345.9 L867 345.9 L867 343.9 L868 343.9 L868 344.4 L869 344.4 L869 343.5 L870 343.5 L870 344.6 L871 344.6 L871 348.7 L872 348.7 L872 353.2 L873 353.2 L873 361.6 L874 361.6 L874 361.7 L875 361.7 L875 361.7 L876 361.7 L876 361.6 L877 361.6 L877 361.6 L878 361.6 L878 361.6 L879 361.6 L879 361.5 L880 361.5 L880 361.8 L881 361.8 L881 361.8 L882 361.8 L882 361.5 L883 361.5 L883 361.9 L884 361.9 L884 361.6 L885 361.6 L885 360.8 L886 360.8 L886 355.1 L887 355.1 L887 346.5 L888 346.5 L888 346.4 L889 346.4 L889 347.0 L890 347.0 L890 359.6 L891 359.6 L891 361.3 L892 361.3 L892 363.2 L893 363.2 L893 363.5 L894 363.5 L894 364.0 L895 364.0 L895 364.1 L896 364.1 L896 364.1 L897 364.1 L897 364.1 L898 364.1 L898 364.1 L899 364.1 L899 364.1 L900 364.1 L900 364.1 L901 364.1 L901 364.1 L902 364.1 L902 364.1 L903 364.1 L903 364.1 L904 364.1 L904 364.1 L905 364.1 L905 364.1 L906 364.1 L906 364.1 L907 364.1 L907 358.6 L908 358.6 L908 358.6 L909 358.6 L909 358.5 L910 358.5 L910 358.7 L911 358.7 L911 359.6 L912 359.6 L912 360.7 L913 360.7 L913 360.9 L914 360.9 L914 361.4 L915 361.4 L915 362.0 L916 362.0 L916 363.2 L917 363.2 L917 363.9 L918 363.9 L918 364.3 L919 364.3 L919 364.3 L920 364.3 L920 364.3 L921 364.3 L921 364.3 L922 364.3 L922 364.2 L923 364.2 L923 364.2 L924 364.2 L924 364.2 L925 364.2 L925 364.2 L926 364.2 L926 364.2 L927 364.2 L927 364.1 L928 364.1 L928 364.1 L929 364.1 L929 362.6 L930 362.6 L930 356.4 L931 356.4 L931 355.5 L932 355.5 L932 355.4 L933 355.4 L933 354.4 L934 354.4 L934 354.8 L935 354.8 L935 359.4 L936 359.4 L936 357.1 L937 357.1 L937 357.0 L938 357.0 L938 358.4 L939 358.4 L939 363.7 L940 363.7 L940 363.7 L941 363.7 L941 363.7 L942 363.7 L942 363.8 L943 363.8 L943 363.8 L944 363.8 L944 363.8 L945 363.8 L945 363.9 L946 363.9 L946 363.9 L947 363.9 L947 363.9 L948 363.9 L948 363.9 L949 363.9 L949 364.0 L950 364.0 L950 364.0 L951 364.0 L951 364.0 L952 364.0 L952 360.7 L953 360.7 L953 360.1 L954 360.1 L954 360.2 L955 360.2 L955 361.8 L956 361.8 L956 363.9 L957 363.9 L957 364.2 L958 364.2 L958 364.6 L959 364.6 L959 364.7 L960 364.7 L960 364.7 L961 364.7 L961 364.7 L962 364.7 L962 364.7 L963 364.7 L963 364.7 L964 364.7 L964 364.7 L965 364.7 L965 364.7 L966 364.7 L966 364.7 L967 364.7 L967 364.7 L968 364.7 L968 364.7 L969 364.7 L969 364.7 L970 364.7 L970 364.7 L971 364.7 L971 364.7 L972 364.7 L972 364.7 L973 364.7 L973 364.7 L974 364.7 L974 364.7 L975 364.7 L975 364.7 L976 364.7 L976 364.7 L977 364.7 L977 364.7 L978 364.7 L978 364.7 L979 364.7 L979 364.7 L980 364.7 L980 364.7 L981 364.7 L981 364.7 L982 364.7 L982 364.7 L983 364.7 L983 364.7 L984 364.7 L984 364.7 L985 364.7 L985 364.7 L986 364.7 L986 364.7 L987 364.7 L987 364.7 L988 364.7 L988 364.7 L989 364.7 L989 364.7 L990 364.7 L990 364.7 L991 364.7 L991 364.7 L992 364.7 L992 364.7 L993 364.7 L993 364.7 L994 364.7 L994 364.7 L995 364.7 L995 364.7 L996 364.7 L996 364.7 L997 364.7 L997 364.7 L998 364.7 L998 364.7 L999 364.7 L999 364.7 L1000 364.7 L1000 364.7 L1001 364.7 L1001 364.7 L1002 364.7 L1002 364.7 L1003 364.7 L1003 364.7 L1004 364.7 L1004 364.7 L1005 364.7 L1005 364.7 L1006 364.7 L1006 364.7 L1007 364.7 L1007 364.7 L1008 364.7 L1008 364.7 L1009 364.7 L1009 364.7 L1010 364.7 L1010 364.7 L1011 364.7 L1011 364.7 L1012 364.7 L1012 364.7 L1013 364.7 L1013 364.7 L1014 364.7 L1014 364.7 L1015 364.7 L1015 364.7 L1016 364.7 L1016 364.7 L1017 364.7 L1017 364.7 L1018 364.7 L1018 364.7 L1019 364.7 L1019 364.7 L1020 364.7 L1020 364.7 L1021 364.7 L1021 364.7 L1022 364.7 L1022 364.7 L1023 364.7 L1023 364.7 L1024 364.7 L1024 364.7 L1025 364.7 L1025 366 Z" fill="#0279a3"/><rect x="42" y="366" width="1377" height="1" fill="#4e4e4e"/></svg>
<div class="t" style="left:0px;width:36.5px;text-align:right;top:236.1px;font-size:11px;line-height:14px;color:#e0e0e0">25k</div>
<div class="t" style="left:0px;width:36.5px;text-align:right;top:260.3px;font-size:11px;line-height:14px;color:#e0e0e0">20k</div>
<div class="t" style="left:0px;width:36.5px;text-align:right;top:284.5px;font-size:11px;line-height:14px;color:#e0e0e0">15k</div>
<div class="t" style="left:0px;width:36.5px;text-align:right;top:309.0px;font-size:11px;line-height:14px;color:#e0e0e0">10k</div>
<div class="t" style="left:0px;width:36.5px;text-align:right;top:333.1px;font-size:11px;line-height:14px;color:#e0e0e0">5.0k</div>
<div class="t" style="left:0px;width:36.5px;text-align:right;top:358.0px;font-size:11px;line-height:14px;color:#e0e0e0">0</div>
<div class="t" style="left:134px;width:120px;text-align:center;top:372px;font-size:11px;line-height:14px;color:#e0e0e0;letter-spacing:-0.05px">2009/11/07 17:00:00</div>
<div class="t" style="left:314px;width:120px;text-align:center;top:372px;font-size:11px;line-height:14px;color:#e0e0e0;letter-spacing:-0.05px">2009/11/15 17:00:00</div>
<div class="t" style="left:472px;width:120px;text-align:center;top:372px;font-size:11px;line-height:14px;color:#e0e0e0;letter-spacing:-0.05px">2009/11/22 17:00:00</div>
<div class="t" style="left:652px;width:120px;text-align:center;top:372px;font-size:11px;line-height:14px;color:#e0e0e0;letter-spacing:-0.05px">2009/11/30 17:00:00</div>
<div class="t" style="left:810px;width:120px;text-align:center;top:372px;font-size:11px;line-height:14px;color:#e0e0e0;letter-spacing:-0.05px">2009/12/07 17:00:00</div>
<div class="t" style="left:991px;width:120px;text-align:center;top:372px;font-size:11px;line-height:14px;color:#e0e0e0;letter-spacing:-0.05px">2009/12/15 17:00:00</div>
<div class="t" style="left:1171px;width:120px;text-align:center;top:372px;font-size:11px;line-height:14px;color:#e0e0e0;letter-spacing:-0.05px">2009/12/23 17:00:00</div>
<div class="a" style="left:478px;top:241px;width:45px;height:21px;border:1px solid #cfcfcf;border-radius:3px;background:#222;"></div>
<div class="a" style="left:500px;top:241px;width:1px;height:21px;background:#cfcfcf;"></div>
<svg style="left:482px;top:244px" width="14" height="14" viewBox="0 0 14 14"><circle cx="6" cy="6" r="4.6" fill="none" stroke="#eee" stroke-width="1.8"/><path d="M9.3 9.3 L12.8 12.8" stroke="#eee" stroke-width="2.2"/><path d="M3.6 6 H8.4" stroke="#eee" stroke-width="1.5"/></svg>
<svg style="left:504px;top:244px" width="14" height="14" viewBox="0 0 14 14"><circle cx="6" cy="6" r="4.6" fill="none" stroke="#eee" stroke-width="1.8"/><path d="M9.3 9.3 L12.8 12.8" stroke="#eee" stroke-width="2.2"/><path d="M3.6 6 H8.4 M6 3.6 V8.4" stroke="#eee" stroke-width="1.5"/></svg>
<div class="a" style="left:531px;top:241px;width:41px;height:21px;border:1px solid #cfcfcf;border-radius:3px;background:#222;"></div>
<div class="a" style="left:551px;top:241px;width:1px;height:21px;background:#cfcfcf;"></div>
<svg style="left:537px;top:245px" width="10" height="13"><path d="M7.5 1.5 L2.5 6.5 L7.5 11.5" fill="none" stroke="#eee" stroke-width="2.2"/></svg>
<svg style="left:556px;top:245px" width="10" height="13"><path d="M2.5 1.5 L7.5 6.5 L2.5 11.5" fill="none" stroke="#eee" stroke-width="2.2"/></svg>
<div class="a" style="left:580px;top:241px;width:179px;height:21px;border:1px solid #0479a2;border-radius:3px;background:#222;"></div>
<div class="a" style="left:580px;top:241px;width:58px;height:21px;background:#0479a2;border-radius:3px 0 0 3px;"></div>
<div class="a" style="left:692px;top:241px;width:1px;height:21px;background:#0479a2;"></div>
<div class="t" style="left:586px;top:244.83px;font-size:12px;line-height:14px;color:#fff;letter-spacing:0.3px;">Session</div>
<div class="t" style="left:643px;top:244.83px;font-size:12px;line-height:14px;color:#0479a2;letter-spacing:0.3px;">Packets</div>
<div class="t" style="left:698px;top:244.83px;font-size:12px;line-height:14px;color:#0479a2;letter-spacing:0.3px;">Databytes</div>
<div class="a" style="left:767px;top:241px;width:81px;height:21px;border:1px solid #0479a2;border-radius:3px;background:#222;"></div>
<div class="a" style="left:809px;top:241px;width:39px;height:21px;background:#0479a2;border-radius:0 3px 3px 0;"></div>
<div class="t" style="left:773px;top:244.83px;font-size:12px;line-height:14px;color:#0479a2;letter-spacing:0.3px;">Lines</div>
<div class="t" style="left:815px;top:244.83px;font-size:12px;line-height:14px;color:#fff;letter-spacing:0.3px;">Bars</div>
<svg style="left:0;top:0" width="1920" height="400"><defs><clipPath id="mc"><rect x="1443" y="241" width="449" height="148" rx="4"/></clipPath></defs><rect x="1442.5" y="240.5" width="450" height="149" rx="4.5" fill="#8aaccf" stroke="#9a9a9a" stroke-width="1"/><g clip-path="url(#mc)"><polygon points="1542.0,265.1 1554.1,265.8 1558.4,264.4 1568.3,265.1 1576.9,267.9 1582.6,266.5 1589.7,269.4 1596.9,266.5 1604.0,267.9 1606.8,275.1 1611.1,280.8 1615.4,292.2 1602.6,293.9 1589.7,294.8 1586.9,292.9 1556.9,291.0 1550.5,283.6 1542.0,277.2" fill="#a3a3a3"/><polygon points="1555.5,258.0 1562.6,253.7 1571.2,255.1 1568.3,262.2 1558.4,263.0" fill="#a3a3a3"/><polygon points="1565.5,249.4 1579.8,245.8 1591.2,244.4 1582.6,252.3 1574.0,253.7" fill="#a3a3a3"/><polygon points="1582.6,253.7 1591.2,250.8 1599.7,252.3 1598.3,260.8 1589.7,263.7 1584.0,259.4" fill="#a3a3a3"/><polygon points="1591.2,243.4 1606.8,242.6 1601.1,248.0" fill="#a3a3a3"/><polygon points="1572.6,256.5 1581.2,255.1 1579.8,263.7 1574.0,263.0" fill="#a3a3a3"/><polygon points="1580.5,273.7 1588.3,267.9 1596.1,275.4 1594.0,287.2 1588.3,281.5 1582.6,280.1" fill="#8aaccf"/><polygon points="1521.3,265.8 1528.4,263.0 1542.0,265.1 1542.0,277.2 1535.5,276.8 1528.4,280.8 1519.9,285.8 1525.6,280.8 1522.0,278.6 1520.6,270.8" fill="#2b2b2b"/><polygon points="1556.9,290.8 1588.3,292.9 1602.6,292.5 1596.9,297.9 1591.9,305.0 1592.3,312.9 1588.3,308.2 1576.9,312.4 1568.3,306.7 1562.6,307.9 1556.2,297.9" fill="#2b2b2b"/><polygon points="1562.4,307.2 1576.9,312.2 1579.0,318.6 1586.9,322.1 1593.3,328.1 1588.3,328.1 1581.2,323.3 1575.5,321.0 1566.9,313.6" fill="#ffffff"/><polygon points="1588.3,315.7 1596.9,316.4 1602.6,319.3 1595.4,318.6" fill="#ffffff"/><polygon points="1600.0,251.1 1605.6,245.6 1618.5,242.8 1627.8,241.4 1638.9,242.3 1648.1,245.1 1643.5,248.3 1639.8,256.7 1637.0,264.1 1630.6,267.8 1622.2,278.0 1618.5,274.3 1613.9,263.1 1609.3,256.7 1600.0,253.9" fill="#ffffff"/><polygon points="1598.0,251.5 1605.4,247.3 1625.4,241.6 1629.7,243.7 1621.1,266.5 1612.5,262.2" fill="#ffffff"/><polygon points="1638.4,271.0 1642.6,269.6 1646.8,271.5 1643.5,273.8 1639.8,273.3" fill="#ffffff"/><polygon points="1591.2,335.0 1599.7,325.3 1611.1,327.8 1629.7,340.0 1625.4,352.1 1615.4,363.5 1606.8,373.5 1602.6,384.9 1596.9,379.2 1598.3,366.3 1598.3,346.4" fill="#ffffff"/><polygon points="1643.9,317.9 1648.2,309.3 1653.9,305.0 1668.2,302.9 1680.0,302.9 1680.0,363.5 1673.9,363.5 1666.7,340.7 1656.8,329.3 1646.8,326.4" fill="#ffffff"/><polygon points="1651.1,297.9 1662.5,295.0 1665.3,302.2 1652.5,302.9" fill="#a3a3a3"/><polygon points="1680.7,280.8 1683.5,273.7 1691.4,268.7 1692.8,266.5 1701.3,264.4 1709.9,262.2 1714.2,259.4 1721.3,258.0 1725.6,259.4 1729.9,255.8 1738.4,254.4 1748.4,253.7 1749.8,257.3 1758.4,259.4 1771.2,259.4 1774.1,261.5 1785.5,263.7 1792.6,263.0 1801.2,265.1 1808.3,267.2 1814.0,272.2 1806.9,272.9 1801.2,275.1 1792.6,276.5 1791.2,280.8 1786.9,286.5 1781.2,283.6 1775.5,285.1 1772.6,289.3 1771.2,297.9 1768.4,305.0 1766.2,297.9 1768.4,287.9 1761.2,286.5 1752.7,287.9 1741.3,287.2 1729.9,287.9 1717.0,283.6 1709.9,285.1 1701.3,287.9 1697.1,290.8 1694.2,296.5 1690.6,292.9 1685.7,285.1" fill="#a3a3a3"/><polygon points="1681.5,279.8 1683.3,273.3 1688.9,267.8 1692.6,268.7 1701.9,265.0 1703.7,258.5 1713.9,253.9 1714.8,259.4 1721.3,259.4 1729.6,255.7 1737.0,253.0 1750.0,253.9 1760.0,257.6 1760.0,287.2 1750.9,286.3 1738.9,290.0 1727.8,288.1 1715.7,285.4 1705.6,287.2 1697.2,290.0 1696.3,297.4 1688.9,296.5 1688.9,290.0 1683.3,283.5" fill="#a3a3a3"/><polygon points="1700.9,262.2 1705.6,256.7 1713.9,253.9 1711.1,255.7 1704.6,261.3" fill="#a3a3a3"/><polygon points="1733.3,248.3 1737.0,246.5 1742.6,250.2 1738.9,252.0" fill="#a3a3a3"/><polygon points="1667.1,248.8 1673.1,247.4 1679.6,248.3 1675.9,252.0 1671.3,253.9" fill="#ffffff"/><polygon points="1662.0,276.1 1666.7,268.7 1673.1,264.5 1681.5,263.1 1683.3,265.0 1676.9,266.9 1670.4,271.5 1667.6,278.9 1663.9,280.7" fill="#ffffff"/><polygon points="1668.5,281.7 1670.4,270.6 1676.9,266.4 1680.6,266.9 1677.8,271.5 1675.0,278.9 1672.2,283.5" fill="#a3a3a3"/><polygon points="1675.9,277.0 1678.7,267.8 1683.3,265.0 1686.1,267.8 1681.5,275.2 1679.6,278.9" fill="#a3a3a3"/><polygon points="1675.9,279.8 1680.6,278.9 1683.8,284.4 1690.7,290.0 1688.9,295.6 1681.5,295.6 1677.8,299.3 1673.1,300.2 1670.4,295.6 1672.2,291.9 1676.9,290.5 1677.3,284.4" fill="#ffffff"/><polygon points="1679.6,299.3 1688.9,298.3 1692.6,299.3 1691.7,303.0 1683.3,303.4" fill="#ffffff"/><polygon points="1681.5,294.8 1688.9,293.9 1691.7,297.9 1685.2,299.7 1681.5,297.4" fill="#8aaccf"/><polygon points="1653.2,281.7 1655.6,279.8 1657.9,283.5 1659.7,288.1 1655.1,289.1 1654.2,285.4" fill="#a3a3a3"/><polygon points="1650.0,285.4 1653.7,284.0 1654.2,287.7 1650.5,288.1" fill="#a3a3a3"/><polygon points="1656.5,290.0 1663.9,288.1 1664.8,295.6 1664.8,299.3 1660.2,299.3 1659.3,304.8 1651.4,303.9 1650.9,297.4 1655.6,295.6 1654.6,291.9" fill="#a3a3a3"/><polygon points="1663.0,290.5 1673.1,289.1 1678.7,294.6 1675.9,301.1 1670.4,302.0 1664.8,297.9" fill="#ffffff"/><polygon points="1670.4,284.4 1677.3,284.4 1677.3,290.5 1671.3,290.5" fill="#a3a3a3"/><polygon points="1664.8,297.4 1668.1,295.6 1674.1,302.0 1671.8,304.4 1666.7,300.2" fill="#a3a3a3"/><polygon points="1663.9,285.4 1668.5,284.0 1672.2,286.3 1671.8,291.9 1667.1,292.3 1663.9,290.0" fill="#5a5a5a"/><polygon points="1697.2,290.0 1705.6,287.2 1715.7,285.4 1727.8,288.1 1738.9,290.0 1750.9,286.3 1760.0,287.2 1760.0,299.3 1756.5,304.8 1757.4,310.4 1748.1,316.9 1740.7,323.3 1736.6,318.2 1733.3,320.6 1723.1,328.0 1719.4,323.3 1714.8,315.9 1706.5,312.2 1700.0,314.1 1701.9,317.8 1695.4,323.3 1688.9,315.9 1688.0,310.4 1686.1,308.5 1692.6,303.9 1696.3,298.3" fill="#ffffff"/><polygon points="1686.1,308.5 1692.6,304.8 1700.0,310.4 1706.5,316.9 1701.9,321.5 1696.3,324.3 1691.7,320.6" fill="#ffffff"/><polygon points="1697.2,294.6 1700.9,293.7 1701.9,302.0 1699.1,300.2" fill="#8aaccf"/><polygon points="1644.4,319.6 1650.0,308.5 1655.6,303.9 1664.8,303.0 1674.1,306.7 1683.3,308.5 1688.9,316.9 1692.6,321.5 1700.0,324.3 1692.6,332.6 1690.7,340.0 1664.8,340.0 1651.9,330.7 1645.4,328.0" fill="#ffffff"/><polygon points="1738.9,323.3 1744.4,321.5 1748.1,328.0 1746.3,332.6 1741.7,330.7" fill="#ffffff"/><polygon points="1737.0,329.8 1740.7,333.5 1744.4,340.0 1741.7,340.0" fill="#ffffff"/><polygon points="1735.0,286.0 1761.0,287.2 1768.4,292.9 1764.0,298.0 1762.7,303.6 1758.0,303.0 1756.0,307.9 1749.8,315.0 1748.4,322.0 1745.5,326.4 1741.0,317.9 1735.0,315.0" fill="#ffffff"/><polygon points="1765.8,307.2 1772.6,300.7 1775.5,295.0 1776.2,285.8 1786.9,275.8 1792.6,279.4 1785.5,287.9 1776.9,297.9 1772.6,304.3" fill="#a3a3a3"/><polygon points="1650.0,303.6 1658.6,302.9 1667.1,302.2 1675.0,303.6 1685.7,306.5 1692.8,320.7 1699.9,325.0 1697.1,335.0 1689.9,337.8 1688.5,350.7 1678.5,363.5 1672.8,363.5 1668.5,352.1 1665.7,337.8 1661.4,329.3 1650.0,326.4" fill="#ffffff"/><polygon points="1694.5,347.8 1698.8,344.7 1697.1,355.2 1693.9,356.4" fill="#ffffff"/><polygon points="1736.3,330.7 1741.3,335.0 1748.4,341.4 1747.0,342.8 1739.8,337.8" fill="#ffffff"/><polygon points="1748.4,340.7 1761.2,341.8 1761.2,343.2 1748.4,342.4" fill="#ffffff"/><polygon points="1748.4,335.0 1752.7,330.0 1758.4,330.7 1757.0,337.8 1749.8,337.8" fill="#ffffff"/><polygon points="1759.8,333.6 1764.1,332.1 1762.7,337.8" fill="#ffffff"/><polygon points="1766.9,336.4 1774.1,336.4 1781.2,341.4 1775.5,342.8 1768.4,340.0" fill="#ffffff"/><polygon points="1757.0,319.3 1759.8,329.3 1762.0,325.0 1759.1,320.7" fill="#ffffff"/><polygon points="1751.3,354.9 1758.4,350.0 1766.9,344.7 1774.1,347.1 1775.8,343.8 1784.1,356.4 1783.3,363.5 1776.2,369.5 1766.9,364.2 1756.2,364.9 1752.7,362.1" fill="#ffffff"/><polygon points="1794.8,375.2 1804.0,366.1 1801.9,363.8 1796.9,371.3" fill="#ffffff"/><polygon points="1776.2,369.9 1780.1,370.6 1778.4,372.8" fill="#ffffff"/></g></svg>
<div class="a" style="left:1445px;top:243px;width:18px;height:20px;background:#333;border-radius:4px;"></div>
<div class="a" style="left:1445px;top:265px;width:18px;height:20px;background:#333;border-radius:4px;"></div>
<svg style="left:1449px;top:246px" width="10" height="10"><path d="M5 0.8 V9.2 M0.8 5 H9.2" stroke="#fff" stroke-width="2.1"/></svg>
<svg style="left:1449px;top:268px" width="10" height="10"><path d="M0.8 5 H9" stroke="#fff" stroke-width="2.2"/></svg>
<div class="a" style="left:1865px;top:243px;width:26px;height:21px;background:#1c1c1c;border-radius:4px;border:1px solid #c8c8c8"></div>
<svg style="left:1873px;top:248px" width="10" height="10"><path d="M1.3 1.3 L8.7 8.7 M8.7 1.3 L1.3 8.7" stroke="#fff" stroke-width="2.6"/></svg>
<div class="a" style="left:1865px;top:267px;width:26px;height:21px;background:#1c1c1c;border-radius:4px;border:1px solid #c8c8c8"></div>
<svg style="left:1871px;top:270px" width="14" height="14"><path d="M2.5 11.5 L11.5 2.5" stroke="#fff" stroke-width="1.8"/><path d="M7.5 1.5 H12.5 V6.5 Z M1.5 7.5 V12.5 H6.5 Z" fill="#fff"/></svg>
<div class="a" style="left:1865px;top:294px;width:26px;height:43px;background:#777;border-radius:4px;border:1px solid #c8c8c8"></div>
<div class="a" style="left:1866px;top:315px;width:24px;height:1px;background:#c8c8c8;"></div>
<div class="t" style="left:1866px;width:24px;text-align:center;top:297px;font-size:12px;line-height:16px;font-weight:700;color:#e8e8e8">S</div>
<div class="t" style="left:1866px;width:24px;text-align:center;top:318px;font-size:12px;line-height:16px;font-weight:700;color:#e8e8e8">D</div>
<div class="a" style="left:1865px;top:340px;width:26px;height:19px;background:#1c1c1c;border-radius:4px;border:1px solid #c8c8c8"></div>
<div class="t" style="left:1866px;width:24px;text-align:center;top:343.5px;font-size:9.5px;line-height:12px;color:#f4f4f4;letter-spacing:0px">XFF</div>
<div class="t" style="left:1352px;width:120px;text-align:center;top:372px;font-size:11px;line-height:14px;color:#e0e0e0;letter-spacing:-0.05px">2009/12/31 17:00:00</div>
<div class="a" style="left:12px;top:397px;width:1879px;height:1px;background:#9a9a9a;"></div>
<div class="a" style="left:12px;top:442px;width:1879px;height:2px;background:#d8d8d8;"></div>
<div class="a" style="left:197px;top:398px;width:1px;height:44px;border-left:1px dotted #cfcfcf"></div>
<div class="a" style="left:297px;top:398px;width:1px;height:44px;border-left:1px dotted #cfcfcf"></div>
<div class="a" style="left:397px;top:398px;width:1px;height:44px;border-left:1px dotted #cfcfcf"></div>
<div class="a" style="left:497px;top:398px;width:1px;height:44px;border-left:1px dotted #cfcfcf"></div>
<div class="a" style="left:637px;top:398px;width:1px;height:44px;border-left:1px dotted #cfcfcf"></div>
<div class="a" style="left:737px;top:398px;width:1px;height:44px;border-left:1px dotted #cfcfcf"></div>
<div class="a" style="left:877px;top:398px;width:1px;height:44px;border-left:1px dotted #cfcfcf"></div>
<div class="a" style="left:977px;top:398px;width:1px;height:44px;border-left:1px dotted #cfcfcf"></div>
<div class="a" style="left:1077px;top:398px;width:1px;height:44px;border-left:1px dotted #cfcfcf"></div>
<div class="a" style="left:1197px;top:398px;width:1px;height:44px;border-left:1px dotted #cfcfcf"></div>
<div class="a" style="left:1455px;top:398px;width:1px;height:44px;border-left:1px dotted #cfcfcf"></div>
<div class="a" style="left:1890px;top:398px;width:1px;height:44px;border-left:1px dotted #cfcfcf"></div>
<div class="a" style="left:12px;top:404px;width:32px;height:31px;background:#0479a2;border-radius:4px;"></div>
<svg style="left:21px;top:413px" width="14" height="12"><rect x="0" y="0.0" width="4" height="3.2" fill="#fff"/><rect x="5" y="0.0" width="4" height="3.2" fill="#fff"/><rect x="10" y="0.0" width="4" height="3.2" fill="#fff"/><rect x="0" y="4.3" width="4" height="3.2" fill="#fff"/><rect x="5" y="4.3" width="4" height="3.2" fill="#fff"/><rect x="10" y="4.3" width="4" height="3.2" fill="#fff"/><rect x="0" y="8.6" width="4" height="3.2" fill="#fff"/><rect x="5" y="8.6" width="4" height="3.2" fill="#fff"/><rect x="10" y="8.6" width="4" height="3.2" fill="#fff"/></svg>
<div class="a" style="left:48px;top:404px;width:31px;height:31px;background:#007f73;border-radius:4px;"></div>
<svg style="left:57px;top:413px" width="14" height="13"><rect x="0.75" y="0.75" width="12.5" height="11.5" fill="none" stroke="#fff" stroke-width="1.5"/><rect x="6.25" y="0.75" width="1.5" height="11.5" fill="#fff"/></svg>
<div class="a" style="left:1851px;top:400px;width:28px;height:22px;background:#0479a2;border-radius:4px;"></div>
<svg style="left:1857px;top:404px" width="16" height="14"><rect x="0" y="1.0" width="3" height="3" fill="#fff"/><rect x="4.5" y="1.0" width="11" height="3" fill="#fff"/><rect x="0" y="5.3" width="3" height="3" fill="#fff"/><rect x="4.5" y="5.3" width="11" height="3" fill="#fff"/><rect x="0" y="9.6" width="3" height="3" fill="#fff"/><rect x="4.5" y="9.6" width="11" height="3" fill="#fff"/></svg>
<svg style="left:98px;top:403px" width="10" height="12"><path d="M0.5 5 L4.5 0.5 L8.5 5 Z" fill="#e8e8e8"/><path d="M0.5 7 L4.5 11.5 L8.5 7 Z" fill="#e8e8e8"/></svg>
<div class="t" style="left:110px;top:400.87px;font-size:14px;line-height:17px;color:#fff;font-weight:700;letter-spacing:0.15px;">Protocols</div>
<svg style="left:198px;top:403px" width="10" height="12"><path d="M0.5 5 L4.5 0.5 L8.5 5 Z" fill="#e8e8e8"/><path d="M0.5 7 L4.5 11.5 L8.5 7 Z" fill="#e8e8e8"/></svg>
<div class="t" style="left:211.5px;top:400.87px;font-size:14px;line-height:17px;color:#fff;font-weight:700;letter-spacing:0.15px;">Zeek Log</div>
<div class="t" style="left:211.5px;top:421.87px;font-size:14px;line-height:17px;color:#fff;font-weight:700;letter-spacing:0.15px;">Type</div>
<svg style="left:298px;top:403px" width="10" height="12"><path d="M0.5 5 L4.5 0.5 L8.5 5 Z" fill="#e8e8e8"/></svg>
<div class="t" style="left:311.5px;top:400.87px;font-size:14px;line-height:17px;color:#fff;font-weight:700;letter-spacing:0.15px;">Start Time</div>
<svg style="left:398px;top:403px" width="10" height="12"><path d="M0.5 5 L4.5 0.5 L8.5 5 Z" fill="#e8e8e8"/><path d="M0.5 7 L4.5 11.5 L8.5 7 Z" fill="#e8e8e8"/></svg>
<div class="t" style="left:411.5px;top:400.87px;font-size:14px;line-height:17px;color:#fff;font-weight:700;letter-spacing:0.15px;">Stop Time</div>
<svg style="left:498px;top:403px" width="10" height="12"><path d="M0.5 5 L4.5 0.5 L8.5 5 Z" fill="#e8e8e8"/><path d="M0.5 7 L4.5 11.5 L8.5 7 Z" fill="#e8e8e8"/></svg>
<div class="t" style="left:511.5px;top:400.87px;font-size:14px;line-height:17px;color:#fff;font-weight:700;letter-spacing:0.15px;">Src IP / Country</div>
<svg style="left:638px;top:403px" width="10" height="12"><path d="M0.5 5 L4.5 0.5 L8.5 5 Z" fill="#e8e8e8"/><path d="M0.5 7 L4.5 11.5 L8.5 7 Z" fill="#e8e8e8"/></svg>
<div class="t" style="left:651.5px;top:400.87px;font-size:14px;line-height:17px;color:#fff;font-weight:700;letter-spacing:0.15px;">Src Port</div>
<svg style="left:738px;top:403px" width="10" height="12"><path d="M0.5 5 L4.5 0.5 L8.5 5 Z" fill="#e8e8e8"/><path d="M0.5 7 L4.5 11.5 L8.5 7 Z" fill="#e8e8e8"/></svg>
<div class="t" style="left:751.5px;top:400.87px;font-size:14px;line-height:17px;color:#fff;font-weight:700;letter-spacing:0.15px;">Dst IP / Country</div>
<svg style="left:878px;top:403px" width="10" height="12"><path d="M0.5 5 L4.5 0.5 L8.5 5 Z" fill="#e8e8e8"/><path d="M0.5 7 L4.5 11.5 L8.5 7 Z" fill="#e8e8e8"/></svg>
<div class="t" style="left:891.5px;top:400.87px;font-size:14px;line-height:17px;color:#fff;font-weight:700;letter-spacing:0.15px;">Dst Port</div>
<svg style="left:978px;top:403px" width="10" height="12"><path d="M0.5 5 L4.5 0.5 L8.5 5 Z" fill="#e8e8e8"/><path d="M0.5 7 L4.5 11.5 L8.5 7 Z" fill="#e8e8e8"/></svg>
<div class="t" style="left:991.5px;top:400.87px;font-size:14px;line-height:17px;color:#fff;font-weight:700;letter-spacing:0.15px;">Packets</div>
<svg style="left:1078px;top:403px" width="10" height="12"><path d="M0.5 5 L4.5 0.5 L8.5 5 Z" fill="#e8e8e8"/><path d="M0.5 7 L4.5 11.5 L8.5 7 Z" fill="#e8e8e8"/></svg>
<div class="t" style="left:1091.5px;top:400.87px;font-size:14px;line-height:17px;color:#fff;font-weight:700;letter-spacing:0.15px;">Databytes /</div>
<div class="t" style="left:1091.5px;top:421.87px;font-size:14px;line-height:17px;color:#fff;font-weight:700;letter-spacing:0.15px;">Bytes</div>
<svg style="left:1198px;top:403px" width="10" height="12"><path d="M0.5 5 L4.5 0.5 L8.5 5 Z" fill="#e8e8e8"/><path d="M0.5 7 L4.5 11.5 L8.5 7 Z" fill="#e8e8e8"/></svg>
<div class="t" style="left:1211.5px;top:400.87px;font-size:14px;line-height:17px;color:#fff;font-weight:700;letter-spacing:0.15px;">Tags</div>
<div class="t" style="left:1457.5px;top:400.87px;font-size:14px;line-height:17px;color:#fff;font-weight:700;letter-spacing:0.15px;">Info</div>
<div class="a" style="left:12px;top:444px;width:1878px;height:36px;background:#565656;"></div>
<div class="a" style="left:12px;top:448px;width:27px;height:26px;background:#28a745;border-radius:4px;"></div>
<svg style="left:20px;top:455px" width="11" height="11"><path d="M5.5 1 V10 M1 5.5 H10" stroke="#f0f0f0" stroke-width="2.3"/></svg>
<div class="t" style="left:45px;top:450.30px;font-size:13px;line-height:16px;color:#eaeaea;">udp</div>
<div class="t" style="left:99px;top:444.6px;font-size:13px;line-height:16px;color:#eaeaea"><span style="margin-right:8.6px">udp</span></div>
<div class="t" style="left:199px;top:444.70px;font-size:13px;line-height:16px;color:#eaeaea;">conn</div>
<div class="t" style="left:299px;top:444.70px;font-size:13px;line-height:16px;color:#eaeaea;">2009/11/13</div>
<div class="t" style="left:299px;top:460.50px;font-size:13px;line-height:16px;color:#eaeaea;">10:25:17</div>
<div class="t" style="left:399px;top:444.70px;font-size:13px;line-height:16px;color:#eaeaea;">2009/11/14</div>
<div class="t" style="left:399px;top:460.50px;font-size:13px;line-height:16px;color:#eaeaea;">10:24:47</div>
<div class="t" style="left:499px;top:444.70px;font-size:13px;line-height:16px;color:#eaeaea;">192.168.1.1</div>
<div class="t" style="left:639px;top:444.70px;font-size:13px;line-height:16px;color:#eaeaea;">626</div>
<div class="t" style="left:739px;top:444.70px;font-size:13px;line-height:16px;color:#eaeaea;">224.0.0.1</div>
<div class="t" style="left:879px;top:444.70px;font-size:13px;line-height:16px;color:#eaeaea;">626</div>
<div class="t" style="left:979px;top:444.70px;font-size:13px;line-height:16px;color:#eaeaea;">2,880</div>
<div class="t" style="left:1079px;top:444.70px;font-size:13px;line-height:16px;color:#eaeaea;">95,040</div>
<div class="t" style="left:1079px;top:459.50px;font-size:13px;line-height:16px;color:#eaeaea;">175,680</div>
<div class="t" style="left:1199px;top:444.6px;font-size:13px;line-height:16px;color:#eaeaea"><span style="margin-right:9.6px">M57 Patents</span><span style="margin-right:9.6px">scenario</span><span style="margin-right:9.6px">net</span></div>
<div class="t" style="left:1199px;top:463.0px;font-size:13px;line-height:16px;color:#eaeaea"><span style="margin-right:9.6px">internal_source</span><span style="margin-right:9.6px">internal_destination</span></div>
<div class="a" style="left:12px;top:484px;width:27px;height:26px;background:#28a745;border-radius:4px;"></div>
<svg style="left:20px;top:491px" width="11" height="11"><path d="M5.5 1 V10 M1 5.5 H10" stroke="#f0f0f0" stroke-width="2.3"/></svg>
<div class="t" style="left:45px;top:486.30px;font-size:13px;line-height:16px;color:#eaeaea;">udp</div>
<div class="t" style="left:99px;top:480.6px;font-size:13px;line-height:16px;color:#eaeaea"><span style="margin-right:8.6px">udp</span></div>
<div class="t" style="left:299px;top:480.70px;font-size:13px;line-height:16px;color:#eaeaea;">2009/11/13</div>
<div class="t" style="left:299px;top:496.50px;font-size:13px;line-height:16px;color:#eaeaea;">10:25:17</div>
<div class="t" style="left:399px;top:480.70px;font-size:13px;line-height:16px;color:#eaeaea;">2009/11/14</div>
<div class="t" style="left:399px;top:496.50px;font-size:13px;line-height:16px;color:#eaeaea;">10:24:47</div>
<div class="t" style="left:499px;top:480.70px;font-size:13px;line-height:16px;color:#eaeaea;">192.168.1.1</div>
<div class="t" style="left:639px;top:480.70px;font-size:13px;line-height:16px;color:#eaeaea;">626</div>
<div class="t" style="left:739px;top:480.70px;font-size:13px;line-height:16px;color:#eaeaea;">224.0.0.1</div>
<div class="t" style="left:879px;top:480.70px;font-size:13px;line-height:16px;color:#eaeaea;">626</div>
<div class="t" style="left:979px;top:480.70px;font-size:13px;line-height:16px;color:#eaeaea;">2,880</div>
<div class="t" style="left:1079px;top:480.70px;font-size:13px;line-height:16px;color:#eaeaea;">192,960</div>
<div class="t" style="left:1079px;top:495.50px;font-size:13px;line-height:16px;color:#eaeaea;">216,000</div>
<div class="t" style="left:1199px;top:480.6px;font-size:13px;line-height:16px;color:#eaeaea"><span style="margin-right:9.6px">scenario</span><span style="margin-right:9.6px">net</span><span style="margin-right:9.6px">M57 Patents</span></div>
<div class="a" style="left:12px;top:514px;width:1878px;height:34px;background:#565656;"></div>
<div class="a" style="left:12px;top:518px;width:27px;height:26px;background:#28a745;border-radius:4px;"></div>
<svg style="left:20px;top:525px" width="11" height="11"><path d="M5.5 1 V10 M1 5.5 H10" stroke="#f0f0f0" stroke-width="2.3"/></svg>
<div class="t" style="left:45px;top:520.30px;font-size:13px;line-height:16px;color:#eaeaea;">udp</div>
<div class="t" style="left:99px;top:514.6px;font-size:13px;line-height:16px;color:#eaeaea"><span style="margin-right:8.6px">udp</span><span style="margin-right:8.6px">dns</span></div>
<div class="t" style="left:299px;top:514.70px;font-size:13px;line-height:16px;color:#eaeaea;">2009/11/13</div>
<div class="t" style="left:299px;top:530.50px;font-size:13px;line-height:16px;color:#eaeaea;">10:25:22</div>
<div class="t" style="left:399px;top:514.70px;font-size:13px;line-height:16px;color:#eaeaea;">2009/11/13</div>
<div class="t" style="left:399px;top:530.50px;font-size:13px;line-height:16px;color:#eaeaea;">10:25:22</div>
<div class="t" style="left:499px;top:514.70px;font-size:13px;line-height:16px;color:#eaeaea;">192.168.1.2</div>
<div class="t" style="left:639px;top:514.70px;font-size:13px;line-height:16px;color:#eaeaea;">56242</div>
<div class="t" style="left:739px;top:514.70px;font-size:13px;line-height:16px;color:#eaeaea;">4.2.2.2</div>
<div class="t" style="left:739px;top:529.50px;font-size:13px;line-height:16px;color:#eaeaea;">US</div>
<div class="t" style="left:879px;top:514.70px;font-size:13px;line-height:16px;color:#eaeaea;">53</div>
<div class="t" style="left:979px;top:514.70px;font-size:13px;line-height:16px;color:#eaeaea;">2</div>
<div class="t" style="left:1079px;top:514.70px;font-size:13px;line-height:16px;color:#eaeaea;">154</div>
<div class="t" style="left:1079px;top:529.50px;font-size:13px;line-height:16px;color:#eaeaea;">170</div>
<div class="t" style="left:1199px;top:514.6px;font-size:13px;line-height:16px;color:#eaeaea"><span style="margin-right:9.6px">scenario</span><span style="margin-right:9.6px">net</span><span style="margin-right:9.6px">M57 Patents</span></div>
<div class="a" style="left:1455px;top:515.5px;width:46px;height:19.5px;background:#222;border:1.5px solid #d0d0d0;border-radius:4px"></div>
<div class="t" style="left:1460px;top:517.00px;font-size:13px;line-height:16px;color:#eaeaea;">Host</div>
<svg style="left:1490px;top:522px" width="7" height="4"><path d="M0 0 H6.5 L3.25 3.6 Z" fill="#e6e6e6"/></svg>
<div class="t" style="left:1507px;top:515.6px;font-size:13px;line-height:16px;color:#eaeaea;letter-spacing:0.1px"><span style="margin-right:9.4px">wiki.github.com</span></div>
<div class="a" style="left:12px;top:552px;width:27px;height:26px;background:#28a745;border-radius:4px;"></div>
<svg style="left:20px;top:559px" width="11" height="11"><path d="M5.5 1 V10 M1 5.5 H10" stroke="#f0f0f0" stroke-width="2.3"/></svg>
<div class="t" style="left:45px;top:554.30px;font-size:13px;line-height:16px;color:#eaeaea;">udp</div>
<div class="t" style="left:99px;top:548.6px;font-size:13px;line-height:16px;color:#eaeaea"><span style="margin-right:8.6px">udp</span><span style="margin-right:8.6px">dns</span></div>
<div class="t" style="left:199px;top:548.70px;font-size:13px;line-height:16px;color:#eaeaea;">conn</div>
<div class="t" style="left:299px;top:548.70px;font-size:13px;line-height:16px;color:#eaeaea;">2009/11/13</div>
<div class="t" style="left:299px;top:564.50px;font-size:13px;line-height:16px;color:#eaeaea;">10:25:22</div>
<div class="t" style="left:399px;top:548.70px;font-size:13px;line-height:16px;color:#eaeaea;">2009/11/13</div>
<div class="t" style="left:399px;top:564.50px;font-size:13px;line-height:16px;color:#eaeaea;">10:25:22</div>
<div class="t" style="left:499px;top:548.70px;font-size:13px;line-height:16px;color:#eaeaea;">192.168.1.2</div>
<div class="t" style="left:639px;top:548.70px;font-size:13px;line-height:16px;color:#eaeaea;">56242</div>
<div class="t" style="left:739px;top:548.70px;font-size:13px;line-height:16px;color:#eaeaea;">4.2.2.2</div>
<div class="t" style="left:739px;top:563.50px;font-size:13px;line-height:16px;color:#eaeaea;">US</div>
<div class="t" style="left:879px;top:548.70px;font-size:13px;line-height:16px;color:#eaeaea;">53</div>
<div class="t" style="left:979px;top:548.70px;font-size:13px;line-height:16px;color:#eaeaea;">2</div>
<div class="t" style="left:1079px;top:548.70px;font-size:13px;line-height:16px;color:#eaeaea;">82</div>
<div class="t" style="left:1079px;top:563.50px;font-size:13px;line-height:16px;color:#eaeaea;">138</div>
<div class="t" style="left:1199px;top:548.6px;font-size:13px;line-height:16px;color:#eaeaea"><span style="margin-right:9.6px">M57 Patents</span><span style="margin-right:9.6px">scenario</span><span style="margin-right:9.6px">net</span></div>
<div class="t" style="left:1199px;top:567.0px;font-size:13px;line-height:16px;color:#eaeaea"><span style="margin-right:9.6px">internal_source</span><span style="margin-right:9.6px">external_destination</span></div>
<div class="a" style="left:12px;top:584px;width:1878px;height:36px;background:#565656;"></div>
<div class="a" style="left:12px;top:588px;width:27px;height:26px;background:#28a745;border-radius:4px;"></div>
<svg style="left:20px;top:595px" width="11" height="11"><path d="M5.5 1 V10 M1 5.5 H10" stroke="#f0f0f0" stroke-width="2.3"/></svg>
<div class="t" style="left:45px;top:590.30px;font-size:13px;line-height:16px;color:#eaeaea;">udp</div>
<div class="t" style="left:99px;top:584.6px;font-size:13px;line-height:16px;color:#eaeaea"><span style="margin-right:8.6px">udp</span><span style="margin-right:8.6px">dns</span></div>
<div class="t" style="left:199px;top:584.70px;font-size:13px;line-height:16px;color:#eaeaea;">dns</div>
<div class="t" style="left:299px;top:584.70px;font-size:13px;line-height:16px;color:#eaeaea;">2009/11/13</div>
<div class="t" style="left:299px;top:600.50px;font-size:13px;line-height:16px;color:#eaeaea;">10:25:22</div>
<div class="t" style="left:399px;top:584.70px;font-size:13px;line-height:16px;color:#eaeaea;">2009/11/13</div>
<div class="t" style="left:399px;top:600.50px;font-size:13px;line-height:16px;color:#eaeaea;">10:25:22</div>
<div class="t" style="left:499px;top:584.70px;font-size:13px;line-height:16px;color:#eaeaea;">192.168.1.2</div>
<div class="t" style="left:639px;top:584.70px;font-size:13px;line-height:16px;color:#eaeaea;">56242</div>
<div class="t" style="left:739px;top:584.70px;font-size:13px;line-height:16px;color:#eaeaea;">4.2.2.2</div>
<div class="t" style="left:739px;top:599.50px;font-size:13px;line-height:16px;color:#eaeaea;">US</div>
<div class="t" style="left:879px;top:584.70px;font-size:13px;line-height:16px;color:#eaeaea;">53</div>
<div class="t" style="left:1199px;top:584.6px;font-size:13px;line-height:16px;color:#eaeaea"><span style="margin-right:9.6px">M57 Patents</span><span style="margin-right:9.6px">scenario</span><span style="margin-right:9.6px">net</span></div>
<div class="t" style="left:1199px;top:603.0px;font-size:13px;line-height:16px;color:#eaeaea"><span style="margin-right:9.6px">internal_source</span><span style="margin-right:9.6px">external_destination</span></div>
<div class="a" style="left:1455px;top:585.5px;width:46px;height:19.5px;background:#222;border:1.5px solid #d0d0d0;border-radius:4px"></div>
<div class="t" style="left:1460px;top:587.00px;font-size:13px;line-height:16px;color:#eaeaea;">Host</div>
<svg style="left:1490px;top:592px" width="7" height="4"><path d="M0 0 H6.5 L3.25 3.6 Z" fill="#e6e6e6"/></svg>
<div class="t" style="left:1507px;top:585.6px;font-size:13px;line-height:16px;color:#eaeaea;letter-spacing:0.1px"><span style="margin-right:9.4px">wiki.github.com</span></div>
<div class="a" style="left:12px;top:624px;width:27px;height:26px;background:#28a745;border-radius:4px;"></div>
<svg style="left:20px;top:631px" width="11" height="11"><path d="M5.5 1 V10 M1 5.5 H10" stroke="#f0f0f0" stroke-width="2.3"/></svg>
<div class="t" style="left:45px;top:626.30px;font-size:13px;line-height:16px;color:#eaeaea;">udp</div>
<div class="t" style="left:99px;top:620.6px;font-size:13px;line-height:16px;color:#eaeaea"><span style="margin-right:8.6px">udp</span><span style="margin-right:8.6px">dns</span></div>
<div class="t" style="left:299px;top:620.70px;font-size:13px;line-height:16px;color:#eaeaea;">2009/11/13</div>
<div class="t" style="left:299px;top:636.50px;font-size:13px;line-height:16px;color:#eaeaea;">10:25:22</div>
<div class="t" style="left:399px;top:620.70px;font-size:13px;line-height:16px;color:#eaeaea;">2009/11/13</div>
<div class="t" style="left:399px;top:636.50px;font-size:13px;line-height:16px;color:#eaeaea;">10:25:22</div>
<div class="t" style="left:499px;top:620.70px;font-size:13px;line-height:16px;color:#eaeaea;">192.168.1.2</div>
<div class="t" style="left:639px;top:620.70px;font-size:13px;line-height:16px;color:#eaeaea;">64122</div>
<div class="t" style="left:739px;top:620.70px;font-size:13px;line-height:16px;color:#eaeaea;">4.2.2.2</div>
<div class="t" style="left:739px;top:635.50px;font-size:13px;line-height:16px;color:#eaeaea;">US</div>
<div class="t" style="left:879px;top:620.70px;font-size:13px;line-height:16px;color:#eaeaea;">53</div>
<div class="t" style="left:979px;top:620.70px;font-size:13px;line-height:16px;color:#eaeaea;">2</div>
<div class="t" style="left:1079px;top:620.70px;font-size:13px;line-height:16px;color:#eaeaea;">193</div>
<div class="t" style="left:1079px;top:635.50px;font-size:13px;line-height:16px;color:#eaeaea;">209</div>
<div class="t" style="left:1199px;top:620.6px;font-size:13px;line-height:16px;color:#eaeaea"><span style="margin-right:9.6px">scenario</span><span style="margin-right:9.6px">net</span><span style="margin-right:9.6px">M57 Patents</span></div>
<div class="a" style="left:1455px;top:621.5px;width:46px;height:19.5px;background:#222;border:1.5px solid #d0d0d0;border-radius:4px"></div>
<div class="t" style="left:1460px;top:623.00px;font-size:13px;line-height:16px;color:#eaeaea;">Host</div>
<svg style="left:1490px;top:628px" width="7" height="4"><path d="M0 0 H6.5 L3.25 3.6 Z" fill="#e6e6e6"/></svg>
<div class="t" style="left:1507px;top:621.6px;font-size:13px;line-height:16px;color:#eaeaea;letter-spacing:0.1px"><span style="margin-right:9.4px">amo.glb.mozilla.net</span><span style="margin-right:9.4px">addons.mozilla.org</span></div>
<div class="a" style="left:12px;top:654px;width:1878px;height:36px;background:#565656;"></div>
<div class="a" style="left:12px;top:658px;width:27px;height:26px;background:#28a745;border-radius:4px;"></div>
<svg style="left:20px;top:665px" width="11" height="11"><path d="M5.5 1 V10 M1 5.5 H10" stroke="#f0f0f0" stroke-width="2.3"/></svg>
<div class="t" style="left:45px;top:660.30px;font-size:13px;line-height:16px;color:#eaeaea;">udp</div>
<div class="t" style="left:99px;top:654.6px;font-size:13px;line-height:16px;color:#eaeaea"><span style="margin-right:8.6px">udp</span><span style="margin-right:8.6px">dns</span></div>
<div class="t" style="left:199px;top:654.70px;font-size:13px;line-height:16px;color:#eaeaea;">dns</div>
<div class="t" style="left:299px;top:654.70px;font-size:13px;line-height:16px;color:#eaeaea;">2009/11/13</div>
<div class="t" style="left:299px;top:670.50px;font-size:13px;line-height:16px;color:#eaeaea;">10:25:22</div>
<div class="t" style="left:399px;top:654.70px;font-size:13px;line-height:16px;color:#eaeaea;">2009/11/13</div>
<div class="t" style="left:399px;top:670.50px;font-size:13px;line-height:16px;color:#eaeaea;">10:25:22</div>
<div class="t" style="left:499px;top:654.70px;font-size:13px;line-height:16px;color:#eaeaea;">192.168.1.2</div>
<div class="t" style="left:639px;top:654.70px;font-size:13px;line-height:16px;color:#eaeaea;">64122</div>
<div class="t" style="left:739px;top:654.70px;font-size:13px;line-height:16px;color:#eaeaea;">4.2.2.2</div>
<div class="t" style="left:739px;top:669.50px;font-size:13px;line-height:16px;color:#eaeaea;">US</div>
<div class="t" style="left:879px;top:654.70px;font-size:13px;line-height:16px;color:#eaeaea;">53</div>
<div class="t" style="left:1199px;top:654.6px;font-size:13px;line-height:16px;color:#eaeaea"><span style="margin-right:9.6px">M57 Patents</span><span style="margin-right:9.6px">scenario</span><span style="margin-right:9.6px">net</span></div>
<div class="t" style="left:1199px;top:673.0px;font-size:13px;line-height:16px;color:#eaeaea"><span style="margin-right:9.6px">internal_source</span><span style="margin-right:9.6px">external_destination</span></div>
<div class="a" style="left:1455px;top:655.5px;width:46px;height:19.5px;background:#222;border:1.5px solid #d0d0d0;border-radius:4px"></div>
<div class="t" style="left:1460px;top:657.00px;font-size:13px;line-height:16px;color:#eaeaea;">Host</div>
<svg style="left:1490px;top:662px" width="7" height="4"><path d="M0 0 H6.5 L3.25 3.6 Z" fill="#e6e6e6"/></svg>
<div class="t" style="left:1507px;top:655.6px;font-size:13px;line-height:16px;color:#eaeaea;letter-spacing:0.1px"><span style="margin-right:9.4px">addons.mozilla.org</span></div>
<div class="a" style="left:12px;top:694px;width:27px;height:26px;background:#28a745;border-radius:4px;"></div>
<svg style="left:20px;top:701px" width="11" height="11"><path d="M5.5 1 V10 M1 5.5 H10" stroke="#f0f0f0" stroke-width="2.3"/></svg>
<div class="t" style="left:45px;top:696.30px;font-size:13px;line-height:16px;color:#eaeaea;">udp</div>
<div class="t" style="left:99px;top:690.6px;font-size:13px;line-height:16px;color:#eaeaea"><span style="margin-right:8.6px">udp</span><span style="margin-right:8.6px">dns</span></div>
<div class="t" style="left:199px;top:690.70px;font-size:13px;line-height:16px;color:#eaeaea;">conn</div>
<div class="t" style="left:299px;top:690.70px;font-size:13px;line-height:16px;color:#eaeaea;">2009/11/13</div>
<div class="t" style="left:299px;top:706.50px;font-size:13px;line-height:16px;color:#eaeaea;">10:25:22</div>
<div class="t" style="left:399px;top:690.70px;font-size:13px;line-height:16px;color:#eaeaea;">2009/11/13</div>
<div class="t" style="left:399px;top:706.50px;font-size:13px;line-height:16px;color:#eaeaea;">10:25:22</div>
<div class="t" style="left:499px;top:690.70px;font-size:13px;line-height:16px;color:#eaeaea;">192.168.1.2</div>
<div class="t" style="left:639px;top:690.70px;font-size:13px;line-height:16px;color:#eaeaea;">64122</div>
<div class="t" style="left:739px;top:690.70px;font-size:13px;line-height:16px;color:#eaeaea;">4.2.2.2</div>
<div class="t" style="left:739px;top:705.50px;font-size:13px;line-height:16px;color:#eaeaea;">US</div>
<div class="t" style="left:879px;top:690.70px;font-size:13px;line-height:16px;color:#eaeaea;">53</div>
<div class="t" style="left:979px;top:690.70px;font-size:13px;line-height:16px;color:#eaeaea;">2</div>
<div class="t" style="left:1079px;top:690.70px;font-size:13px;line-height:16px;color:#eaeaea;">121</div>
<div class="t" style="left:1079px;top:705.50px;font-size:13px;line-height:16px;color:#eaeaea;">177</div>
<div class="t" style="left:1199px;top:690.6px;font-size:13px;line-height:16px;color:#eaeaea"><span style="margin-right:9.6px">M57 Patents</span><span style="margin-right:9.6px">scenario</span><span style="margin-right:9.6px">net</span></div>
<div class="t" style="left:1199px;top:709.0px;font-size:13px;line-height:16px;color:#eaeaea"><span style="margin-right:9.6px">internal_source</span><span style="margin-right:9.6px">external_destination</span></div>
<div class="a" style="left:12px;top:726px;width:1878px;height:34px;background:#565656;"></div>
<div class="a" style="left:12px;top:730px;width:27px;height:26px;background:#28a745;border-radius:4px;"></div>
<svg style="left:20px;top:737px" width="11" height="11"><path d="M5.5 1 V10 M1 5.5 H10" stroke="#f0f0f0" stroke-width="2.3"/></svg>
<div class="t" style="left:45px;top:732.30px;font-size:13px;line-height:16px;color:#eaeaea;">udp</div>
<div class="t" style="left:99px;top:726.6px;font-size:13px;line-height:16px;color:#eaeaea"><span style="margin-right:8.6px">udp</span><span style="margin-right:8.6px">dns</span></div>
<div class="t" style="left:299px;top:726.70px;font-size:13px;line-height:16px;color:#eaeaea;">2009/11/13</div>
<div class="t" style="left:299px;top:742.50px;font-size:13px;line-height:16px;color:#eaeaea;">10:25:22</div>
<div class="t" style="left:399px;top:726.70px;font-size:13px;line-height:16px;color:#eaeaea;">2009/11/13</div>
<div class="t" style="left:399px;top:742.50px;font-size:13px;line-height:16px;color:#eaeaea;">10:25:22</div>
<div class="t" style="left:499px;top:726.70px;font-size:13px;line-height:16px;color:#eaeaea;">192.168.1.2</div>
<div class="t" style="left:639px;top:726.70px;font-size:13px;line-height:16px;color:#eaeaea;">58392</div>
<div class="t" style="left:739px;top:726.70px;font-size:13px;line-height:16px;color:#eaeaea;">4.2.2.2</div>
<div class="t" style="left:739px;top:741.50px;font-size:13px;line-height:16px;color:#eaeaea;">US</div>
<div class="t" style="left:879px;top:726.70px;font-size:13px;line-height:16px;color:#eaeaea;">53</div>
<div class="t" style="left:979px;top:726.70px;font-size:13px;line-height:16px;color:#eaeaea;">2</div>
<div class="t" style="left:1079px;top:726.70px;font-size:13px;line-height:16px;color:#eaeaea;">166</div>
<div class="t" style="left:1079px;top:741.50px;font-size:13px;line-height:16px;color:#eaeaea;">182</div>
<div class="t" style="left:1199px;top:726.6px;font-size:13px;line-height:16px;color:#eaeaea"><span style="margin-right:9.6px">scenario</span><span style="margin-right:9.6px">net</span><span style="margin-right:9.6px">M57 Patents</span></div>
<div class="a" style="left:1455px;top:727.5px;width:46px;height:19.5px;background:#222;border:1.5px solid #d0d0d0;border-radius:4px"></div>
<div class="t" style="left:1460px;top:729.00px;font-size:13px;line-height:16px;color:#eaeaea;">Host</div>
<svg style="left:1490px;top:734px" width="7" height="4"><path d="M0 0 H6.5 L3.25 3.6 Z" fill="#e6e6e6"/></svg>
<div class="t" style="left:1507px;top:727.6px;font-size:13px;line-height:16px;color:#eaeaea;letter-spacing:0.1px"><span style="margin-right:9.4px">en-us.www.mozilla.com</span></div>
<div class="a" style="left:12px;top:764px;width:27px;height:26px;background:#28a745;border-radius:4px;"></div>
<svg style="left:20px;top:771px" width="11" height="11"><path d="M5.5 1 V10 M1 5.5 H10" stroke="#f0f0f0" stroke-width="2.3"/></svg>
<div class="t" style="left:45px;top:766.30px;font-size:13px;line-height:16px;color:#eaeaea;">udp</div>
<div class="t" style="left:99px;top:760.6px;font-size:13px;line-height:16px;color:#eaeaea"><span style="margin-right:8.6px">udp</span><span style="margin-right:8.6px">dns</span></div>
<div class="t" style="left:199px;top:760.70px;font-size:13px;line-height:16px;color:#eaeaea;">conn</div>
<div class="t" style="left:299px;top:760.70px;font-size:13px;line-height:16px;color:#eaeaea;">2009/11/13</div>
<div class="t" style="left:299px;top:776.50px;font-size:13px;line-height:16px;color:#eaeaea;">10:25:22</div>
<div class="t" style="left:399px;top:760.70px;font-size:13px;line-height:16px;color:#eaeaea;">2009/11/13</div>
<div class="t" style="left:399px;top:776.50px;font-size:13px;line-height:16px;color:#eaeaea;">10:25:22</div>
<div class="t" style="left:499px;top:760.70px;font-size:13px;line-height:16px;color:#eaeaea;">192.168.1.2</div>
<div class="t" style="left:639px;top:760.70px;font-size:13px;line-height:16px;color:#eaeaea;">58392</div>
<div class="t" style="left:739px;top:760.70px;font-size:13px;line-height:16px;color:#eaeaea;">4.2.2.2</div>
<div class="t" style="left:739px;top:775.50px;font-size:13px;line-height:16px;color:#eaeaea;">US</div>
<div class="t" style="left:879px;top:760.70px;font-size:13px;line-height:16px;color:#eaeaea;">53</div>
<div class="t" style="left:979px;top:760.70px;font-size:13px;line-height:16px;color:#eaeaea;">2</div>
<div class="t" style="left:1079px;top:760.70px;font-size:13px;line-height:16px;color:#eaeaea;">94</div>
<div class="t" style="left:1079px;top:775.50px;font-size:13px;line-height:16px;color:#eaeaea;">150</div>
<div class="t" style="left:1199px;top:760.6px;font-size:13px;line-height:16px;color:#eaeaea"><span style="margin-right:9.6px">M57 Patents</span><span style="margin-right:9.6px">scenario</span><span style="margin-right:9.6px">net</span></div>
<div class="t" style="left:1199px;top:779.0px;font-size:13px;line-height:16px;color:#eaeaea"><span style="margin-right:9.6px">internal_source</span><span style="margin-right:9.6px">external_destination</span></div>
<div class="a" style="left:12px;top:796px;width:1878px;height:36px;background:#565656;"></div>
<div class="a" style="left:12px;top:800px;width:27px;height:26px;background:#28a745;border-radius:4px;"></div>
<svg style="left:20px;top:807px" width="11" height="11"><path d="M5.5 1 V10 M1 5.5 H10" stroke="#f0f0f0" stroke-width="2.3"/></svg>
<div class="t" style="left:45px;top:802.30px;font-size:13px;line-height:16px;color:#eaeaea;">udp</div>
<div class="t" style="left:99px;top:796.6px;font-size:13px;line-height:16px;color:#eaeaea"><span style="margin-right:8.6px">udp</span><span style="margin-right:8.6px">dns</span></div>
<div class="t" style="left:199px;top:796.70px;font-size:13px;line-height:16px;color:#eaeaea;">dns</div>
<div class="t" style="left:299px;top:796.70px;font-size:13px;line-height:16px;color:#eaeaea;">2009/11/13</div>
<div class="t" style="left:299px;top:812.50px;font-size:13px;line-height:16px;color:#eaeaea;">10:25:22</div>
<div class="t" style="left:399px;top:796.70px;font-size:13px;line-height:16px;color:#eaeaea;">2009/11/13</div>
<div class="t" style="left:399px;top:812.50px;font-size:13px;line-height:16px;color:#eaeaea;">10:25:22</div>
<div class="t" style="left:499px;top:796.70px;font-size:13px;line-height:16px;color:#eaeaea;">192.168.1.2</div>
<div class="t" style="left:639px;top:796.70px;font-size:13px;line-height:16px;color:#eaeaea;">58392</div>
<div class="t" style="left:739px;top:796.70px;font-size:13px;line-height:16px;color:#eaeaea;">4.2.2.2</div>
<div class="t" style="left:739px;top:811.50px;font-size:13px;line-height:16px;color:#eaeaea;">US</div>
<div class="t" style="left:879px;top:796.70px;font-size:13px;line-height:16px;color:#eaeaea;">53</div>
<div class="t" style="left:1199px;top:796.6px;font-size:13px;line-height:16px;color:#eaeaea"><span style="margin-right:9.6px">M57 Patents</span><span style="margin-right:9.6px">scenario</span><span style="margin-right:9.6px">net</span></div>
<div class="t" style="left:1199px;top:815.0px;font-size:13px;line-height:16px;color:#eaeaea"><span style="margin-right:9.6px">internal_source</span><span style="margin-right:9.6px">external_destination</span></div>
<div class="a" style="left:1455px;top:797.5px;width:46px;height:19.5px;background:#222;border:1.5px solid #d0d0d0;border-radius:4px"></div>
<div class="t" style="left:1460px;top:799.00px;font-size:13px;line-height:16px;color:#eaeaea;">Host</div>
<svg style="left:1490px;top:804px" width="7" height="4"><path d="M0 0 H6.5 L3.25 3.6 Z" fill="#e6e6e6"/></svg>
<div class="t" style="left:1507px;top:797.6px;font-size:13px;line-height:16px;color:#eaeaea;letter-spacing:0.1px"><span style="margin-right:9.4px">en-us.www.mozilla.com</span></div>
<div class="a" style="left:12px;top:836px;width:27px;height:26px;background:#28a745;border-radius:4px;"></div>
<svg style="left:20px;top:843px" width="11" height="11"><path d="M5.5 1 V10 M1 5.5 H10" stroke="#f0f0f0" stroke-width="2.3"/></svg>
<div class="t" style="left:45px;top:838.30px;font-size:13px;line-height:16px;color:#eaeaea;">tcp</div>
<div class="t" style="left:99px;top:832.6px;font-size:13px;line-height:16px;color:#eaeaea"><span style="margin-right:8.6px">http</span><span style="margin-right:8.6px">tcp</span></div>
<div class="t" style="left:299px;top:832.70px;font-size:13px;line-height:16px;color:#eaeaea;">2009/11/13</div>
<div class="t" style="left:299px;top:848.50px;font-size:13px;line-height:16px;color:#eaeaea;">10:25:22</div>
<div class="t" style="left:399px;top:832.70px;font-size:13px;line-height:16px;color:#eaeaea;">2009/11/13</div>
<div class="t" style="left:399px;top:848.50px;font-size:13px;line-height:16px;color:#eaeaea;">10:30:26</div>
<div class="t" style="left:499px;top:832.70px;font-size:13px;line-height:16px;color:#eaeaea;">192.168.1.2</div>
<div class="t" style="left:639px;top:832.70px;font-size:13px;line-height:16px;color:#eaeaea;">1246</div>
<div class="t" style="left:739px;top:832.70px;font-size:13px;line-height:16px;color:#eaeaea;">63.245.209.10</div>
<div class="t" style="left:739px;top:847.50px;font-size:13px;line-height:16px;color:#eaeaea;">US</div>
<div class="t" style="left:879px;top:832.70px;font-size:13px;line-height:16px;color:#eaeaea;">80</div>
<div class="t" style="left:979px;top:832.70px;font-size:13px;line-height:16px;color:#eaeaea;">13</div>
<div class="t" style="left:1079px;top:832.70px;font-size:13px;line-height:16px;color:#eaeaea;">946</div>
<div class="t" style="left:1079px;top:847.50px;font-size:13px;line-height:16px;color:#eaeaea;">1,698</div>
<div class="t" style="left:1199px;top:832.6px;font-size:13px;line-height:16px;color:#eaeaea"><span style="margin-right:9.6px">scenario</span><span style="margin-right:9.6px">net</span><span style="margin-right:9.6px">M57 Patents</span></div>
<div class="a" style="left:1455px;top:833.5px;width:41px;height:19.5px;background:#222;border:1.5px solid #d0d0d0;border-radius:4px"></div>
<div class="t" style="left:1460px;top:835.00px;font-size:13px;line-height:16px;color:#eaeaea;">URI</div>
<svg style="left:1485px;top:840px" width="7" height="4"><path d="M0 0 H6.5 L3.25 3.6 Z" fill="#e6e6e6"/></svg>
<div class="t" style="left:1502px;top:833.6px;font-size:13px;line-height:16px;color:#eaeaea;letter-spacing:0.1px"><span style="margin-right:9.4px">en-us.www.mozilla.com/favicon.ico</span></div>
<div class="a" style="left:12px;top:866px;width:1878px;height:34px;background:#565656;"></div>
<div class="a" style="left:12px;top:870px;width:27px;height:26px;background:#28a745;border-radius:4px;"></div>
<svg style="left:20px;top:877px" width="11" height="11"><path d="M5.5 1 V10 M1 5.5 H10" stroke="#f0f0f0" stroke-width="2.3"/></svg>
<div class="t" style="left:45px;top:872.30px;font-size:13px;line-height:16px;color:#eaeaea;">tcp</div>
<div class="t" style="left:99px;top:866.6px;font-size:13px;line-height:16px;color:#eaeaea"><span style="margin-right:8.6px">tls</span><span style="margin-right:8.6px">tcp</span></div>
<div class="t" style="left:299px;top:866.70px;font-size:13px;line-height:16px;color:#eaeaea;">2009/11/13</div>
<div class="t" style="left:299px;top:882.50px;font-size:13px;line-height:16px;color:#eaeaea;">10:25:22</div>
<div class="t" style="left:399px;top:866.70px;font-size:13px;line-height:16px;color:#eaeaea;">2009/11/13</div>
<div class="t" style="left:399px;top:882.50px;font-size:13px;line-height:16px;color:#eaeaea;">10:25:41</div>
<div class="t" style="left:499px;top:866.70px;font-size:13px;line-height:16px;color:#eaeaea;">192.168.1.2</div>
<div class="t" style="left:639px;top:866.70px;font-size:13px;line-height:16px;color:#eaeaea;">1245</div>
<div class="t" style="left:739px;top:866.70px;font-size:13px;line-height:16px;color:#eaeaea;">63.245.209.91</div>
<div class="t" style="left:739px;top:881.50px;font-size:13px;line-height:16px;color:#eaeaea;">US</div>
<div class="t" style="left:879px;top:866.70px;font-size:13px;line-height:16px;color:#eaeaea;">443</div>
<div class="t" style="left:979px;top:866.70px;font-size:13px;line-height:16px;color:#eaeaea;">21</div>
<div class="t" style="left:1079px;top:866.70px;font-size:13px;line-height:16px;color:#eaeaea;">6,746</div>
<div class="t" style="left:1079px;top:881.50px;font-size:13px;line-height:16px;color:#eaeaea;">7,972</div>
<div class="t" style="left:1199px;top:866.6px;font-size:13px;line-height:16px;color:#eaeaea"><span style="margin-right:9.6px">scenario</span><span style="margin-right:9.6px">net</span><span style="margin-right:9.6px">M57 Patents</span></div>
<div class="a" style="left:12px;top:904px;width:27px;height:26px;background:#28a745;border-radius:4px;"></div>
<svg style="left:20px;top:911px" width="11" height="11"><path d="M5.5 1 V10 M1 5.5 H10" stroke="#f0f0f0" stroke-width="2.3"/></svg>
<div class="t" style="left:45px;top:906.30px;font-size:13px;line-height:16px;color:#eaeaea;">tcp</div>
<div class="t" style="left:99px;top:900.6px;font-size:13px;line-height:16px;color:#eaeaea"><span style="margin-right:8.6px">tcp</span><span style="margin-right:8.6px">ssl</span></div>
<div class="t" style="left:199px;top:900.70px;font-size:13px;line-height:16px;color:#eaeaea;">conn</div>
<div class="t" style="left:299px;top:900.70px;font-size:13px;line-height:16px;color:#eaeaea;">2009/11/13</div>
<div class="t" style="left:299px;top:916.50px;font-size:13px;line-height:16px;color:#eaeaea;">10:25:22</div>
<div class="t" style="left:399px;top:900.70px;font-size:13px;line-height:16px;color:#eaeaea;">2009/11/13</div>
<div class="t" style="left:399px;top:916.50px;font-size:13px;line-height:16px;color:#eaeaea;">10:25:41</div>
<div class="t" style="left:499px;top:900.70px;font-size:13px;line-height:16px;color:#eaeaea;">192.168.1.2</div>
<div class="t" style="left:639px;top:900.70px;font-size:13px;line-height:16px;color:#eaeaea;">1245</div>
<div class="t" style="left:739px;top:900.70px;font-size:13px;line-height:16px;color:#eaeaea;">63.245.209.91</div>
<div class="t" style="left:739px;top:915.50px;font-size:13px;line-height:16px;color:#eaeaea;">US</div>
<div class="t" style="left:879px;top:900.70px;font-size:13px;line-height:16px;color:#eaeaea;">443</div>
<div class="t" style="left:979px;top:900.70px;font-size:13px;line-height:16px;color:#eaeaea;">21</div>
<div class="t" style="left:1079px;top:900.70px;font-size:13px;line-height:16px;color:#eaeaea;">6,746</div>
<div class="t" style="left:1079px;top:915.50px;font-size:13px;line-height:16px;color:#eaeaea;">7,598</div>
<div class="t" style="left:1199px;top:900.6px;font-size:13px;line-height:16px;color:#eaeaea"><span style="margin-right:9.6px">M57 Patents</span><span style="margin-right:9.6px">scenario</span><span style="margin-right:9.6px">net</span></div>
<div class="t" style="left:1199px;top:919.0px;font-size:13px;line-height:16px;color:#eaeaea"><span style="margin-right:9.6px">internal_source</span><span style="margin-right:9.6px">external_destination</span></div>
<div class="a" style="left:12px;top:936px;width:1878px;height:36px;background:#565656;"></div>
<div class="a" style="left:12px;top:940px;width:27px;height:26px;background:#28a745;border-radius:4px;"></div>
<svg style="left:20px;top:947px" width="11" height="11"><path d="M5.5 1 V10 M1 5.5 H10" stroke="#f0f0f0" stroke-width="2.3"/></svg>
<div class="t" style="left:45px;top:942.30px;font-size:13px;line-height:16px;color:#eaeaea;">tcp</div>
<div class="t" style="left:99px;top:936.6px;font-size:13px;line-height:16px;color:#eaeaea"><span style="margin-right:8.6px">tcp</span><span style="margin-right:8.6px">http</span></div>
<div class="t" style="left:199px;top:936.70px;font-size:13px;line-height:16px;color:#eaeaea;">conn</div>
<div class="t" style="left:299px;top:936.70px;font-size:13px;line-height:16px;color:#eaeaea;">2009/11/13</div>
<div class="t" style="left:299px;top:952.50px;font-size:13px;line-height:16px;color:#eaeaea;">10:25:22</div>
<div class="t" style="left:399px;top:936.70px;font-size:13px;line-height:16px;color:#eaeaea;">2009/11/13</div>
<div class="t" style="left:399px;top:952.50px;font-size:13px;line-height:16px;color:#eaeaea;">10:30:26</div>
<div class="t" style="left:499px;top:936.70px;font-size:13px;line-height:16px;color:#eaeaea;">192.168.1.2</div>
<div class="t" style="left:639px;top:936.70px;font-size:13px;line-height:16px;color:#eaeaea;">1246</div>
<div class="t" style="left:739px;top:936.70px;font-size:13px;line-height:16px;color:#eaeaea;">63.245.209.10</div>
<div class="t" style="left:739px;top:951.50px;font-size:13px;line-height:16px;color:#eaeaea;">US</div>
<div class="t" style="left:879px;top:936.70px;font-size:13px;line-height:16px;color:#eaeaea;">80</div>
<div class="t" style="left:979px;top:936.70px;font-size:13px;line-height:16px;color:#eaeaea;">13</div>
<div class="t" style="left:1079px;top:936.70px;font-size:13px;line-height:16px;color:#eaeaea;">946</div>
<div class="t" style="left:1079px;top:951.50px;font-size:13px;line-height:16px;color:#eaeaea;">1,478</div>
<div class="t" style="left:1199px;top:936.6px;font-size:13px;line-height:16px;color:#eaeaea"><span style="margin-right:9.6px">M57 Patents</span><span style="margin-right:9.6px">scenario</span><span style="margin-right:9.6px">net</span></div>
<div class="t" style="left:1199px;top:955.0px;font-size:13px;line-height:16px;color:#eaeaea"><span style="margin-right:9.6px">internal_source</span><span style="margin-right:9.6px">external_destination</span></div>
<div class="a" style="left:12px;top:976px;width:27px;height:26px;background:#28a745;border-radius:4px;"></div>
<svg style="left:20px;top:983px" width="11" height="11"><path d="M5.5 1 V10 M1 5.5 H10" stroke="#f0f0f0" stroke-width="2.3"/></svg>
<div class="t" style="left:45px;top:978.30px;font-size:13px;line-height:16px;color:#eaeaea;">tcp</div>
<div class="t" style="left:99px;top:972.6px;font-size:13px;line-height:16px;color:#eaeaea"><span style="margin-right:8.6px">tcp</span><span style="margin-right:8.6px">tls</span></div>
<div class="t" style="left:199px;top:972.70px;font-size:13px;line-height:16px;color:#eaeaea;">ssl</div>
<div class="t" style="left:299px;top:972.70px;font-size:13px;line-height:16px;color:#eaeaea;">2009/11/13</div>
<div class="t" style="left:299px;top:988.50px;font-size:13px;line-height:16px;color:#eaeaea;">10:25:22</div>
<div class="t" style="left:399px;top:972.70px;font-size:13px;line-height:16px;color:#eaeaea;">2009/11/13</div>
<div class="t" style="left:399px;top:988.50px;font-size:13px;line-height:16px;color:#eaeaea;">10:25:22</div>
<div class="t" style="left:499px;top:972.70px;font-size:13px;line-height:16px;color:#eaeaea;">192.168.1.2</div>
<div class="t" style="left:639px;top:972.70px;font-size:13px;line-height:16px;color:#eaeaea;">1245</div>
<div class="t" style="left:739px;top:972.70px;font-size:13px;line-height:16px;color:#eaeaea;">63.245.209.91</div>
<div class="t" style="left:739px;top:987.50px;font-size:13px;line-height:16px;color:#eaeaea;">US</div>
<div class="t" style="left:879px;top:972.70px;font-size:13px;line-height:16px;color:#eaeaea;">443</div>
<div class="t" style="left:1199px;top:972.6px;font-size:13px;line-height:16px;color:#eaeaea"><span style="margin-right:9.6px">M57 Patents</span><span style="margin-right:9.6px">scenario</span><span style="margin-right:9.6px">net</span></div>
<div class="t" style="left:1199px;top:991.0px;font-size:13px;line-height:16px;color:#eaeaea"><span style="margin-right:9.6px">internal_source</span><span style="margin-right:9.6px">external_destination</span></div>
<div class="a" style="left:12px;top:1008px;width:1878px;height:36px;background:#565656;"></div>
<div class="a" style="left:12px;top:1012px;width:27px;height:26px;background:#28a745;border-radius:4px;"></div>
<svg style="left:20px;top:1019px" width="11" height="11"><path d="M5.5 1 V10 M1 5.5 H10" stroke="#f0f0f0" stroke-width="2.3"/></svg>
<div class="t" style="left:45px;top:1014.30px;font-size:13px;line-height:16px;color:#eaeaea;">tcp</div>
<div class="t" style="left:99px;top:1008.6px;font-size:13px;line-height:16px;color:#eaeaea"><span style="margin-right:8.6px">tcp</span><span style="margin-right:8.6px">http</span></div>
<div class="t" style="left:199px;top:1008.70px;font-size:13px;line-height:16px;color:#eaeaea;">http</div>
<div class="t" style="left:299px;top:1008.70px;font-size:13px;line-height:16px;color:#eaeaea;">2009/11/13</div>
<div class="t" style="left:299px;top:1024.50px;font-size:13px;line-height:16px;color:#eaeaea;">10:25:22</div>
<div class="t" style="left:399px;top:1008.70px;font-size:13px;line-height:16px;color:#eaeaea;">2009/11/13</div>
<div class="t" style="left:399px;top:1024.50px;font-size:13px;line-height:16px;color:#eaeaea;">10:25:22</div>
<div class="t" style="left:499px;top:1008.70px;font-size:13px;line-height:16px;color:#eaeaea;">192.168.1.2</div>
<div class="t" style="left:639px;top:1008.70px;font-size:13px;line-height:16px;color:#eaeaea;">1246</div>
<div class="t" style="left:739px;top:1008.70px;font-size:13px;line-height:16px;color:#eaeaea;">63.245.209.10</div>
<div class="t" style="left:739px;top:1023.50px;font-size:13px;line-height:16px;color:#eaeaea;">US</div>
<div class="t" style="left:879px;top:1008.70px;font-size:13px;line-height:16px;color:#eaeaea;">80</div>
<div class="t" style="left:1079px;top:1008.70px;font-size:13px;line-height:16px;color:#eaeaea;">0</div>
<div class="t" style="left:1199px;top:1008.6px;font-size:13px;line-height:16px;color:#eaeaea"><span style="margin-right:9.6px">M57 Patents</span><span style="margin-right:9.6px">scenario</span><span style="margin-right:9.6px">net</span></div>
<div class="t" style="left:1199px;top:1027.0px;font-size:13px;line-height:16px;color:#eaeaea"><span style="margin-right:9.6px">internal_source</span><span style="margin-right:9.6px">external_destination</span></div>
<div class="a" style="left:1455px;top:1009.5px;width:41px;height:19.5px;background:#222;border:1.5px solid #d0d0d0;border-radius:4px"></div>
<div class="t" style="left:1460px;top:1011.00px;font-size:13px;line-height:16px;color:#eaeaea;">URI</div>
<svg style="left:1485px;top:1016px" width="7" height="4"><path d="M0 0 H6.5 L3.25 3.6 Z" fill="#e6e6e6"/></svg>
<div class="t" style="left:1502px;top:1009.6px;font-size:13px;line-height:16px;color:#eaeaea;letter-spacing:0.1px"><span style="margin-right:9.4px">/favicon.ico</span></div>
<div class="a" style="left:12px;top:1048px;width:27px;height:26px;background:#28a745;border-radius:4px;"></div>
<svg style="left:20px;top:1055px" width="11" height="11"><path d="M5.5 1 V10 M1 5.5 H10" stroke="#f0f0f0" stroke-width="2.3"/></svg>
<div class="t" style="left:45px;top:1050.30px;font-size:13px;line-height:16px;color:#eaeaea;">tcp</div>
<div class="t" style="left:99px;top:1044.6px;font-size:13px;line-height:16px;color:#eaeaea"><span style="margin-right:8.6px">tcp</span><span style="margin-right:8.6px">ssl</span></div>
<div class="t" style="left:199px;top:1044.70px;font-size:13px;line-height:16px;color:#eaeaea;">known_services</div>
<div class="t" style="left:299px;top:1044.70px;font-size:13px;line-height:16px;color:#eaeaea;">2009/11/13</div>
<div class="t" style="left:299px;top:1060.50px;font-size:13px;line-height:16px;color:#eaeaea;">10:25:22</div>
<div class="t" style="left:399px;top:1044.70px;font-size:13px;line-height:16px;color:#eaeaea;">2009/11/13</div>
<div class="t" style="left:399px;top:1060.50px;font-size:13px;line-height:16px;color:#eaeaea;">10:25:22</div>
<div class="t" style="left:739px;top:1044.70px;font-size:13px;line-height:16px;color:#eaeaea;">63.245.209.91</div>
<div class="t" style="left:739px;top:1059.50px;font-size:13px;line-height:16px;color:#eaeaea;">US</div>
<div class="t" style="left:879px;top:1044.70px;font-size:13px;line-height:16px;color:#eaeaea;">443</div>
<div class="t" style="left:1199px;top:1044.6px;font-size:13px;line-height:16px;color:#eaeaea"><span style="margin-right:9.6px">M57 Patents</span><span style="margin-right:9.6px">scenario</span><span style="margin-right:9.6px">net</span></div>
<div class="t" style="left:1199px;top:1063.0px;font-size:13px;line-height:16px;color:#eaeaea"><span style="margin-right:9.6px">external_destination</span></div>
<div class="a" style="left:1901px;top:81px;width:15px;height:995px;background:#f1f1f1;border-left:1px solid #fafafa;"></div>
<div class="a" style="left:1903px;top:96px;width:11px;height:379px;background:#c1c1c1;"></div>
<svg style="left:1904px;top:86px" width="9" height="6"><path d="M0.5 5 L4.5 1 L8.5 5 Z" fill="#a3a3a3"/></svg>
<svg style="left:1904px;top:1065px" width="9" height="6"><path d="M0.5 1 L4.5 5 L8.5 1 Z" fill="#505050"/></svg>
<div class="a" style="left:1916px;top:81px;width:4px;height:999px;background:#464646;"></div>
<div class="a" style="left:0px;top:1076px;width:1920px;height:4px;background:#464646;"></div>
</body></html>
